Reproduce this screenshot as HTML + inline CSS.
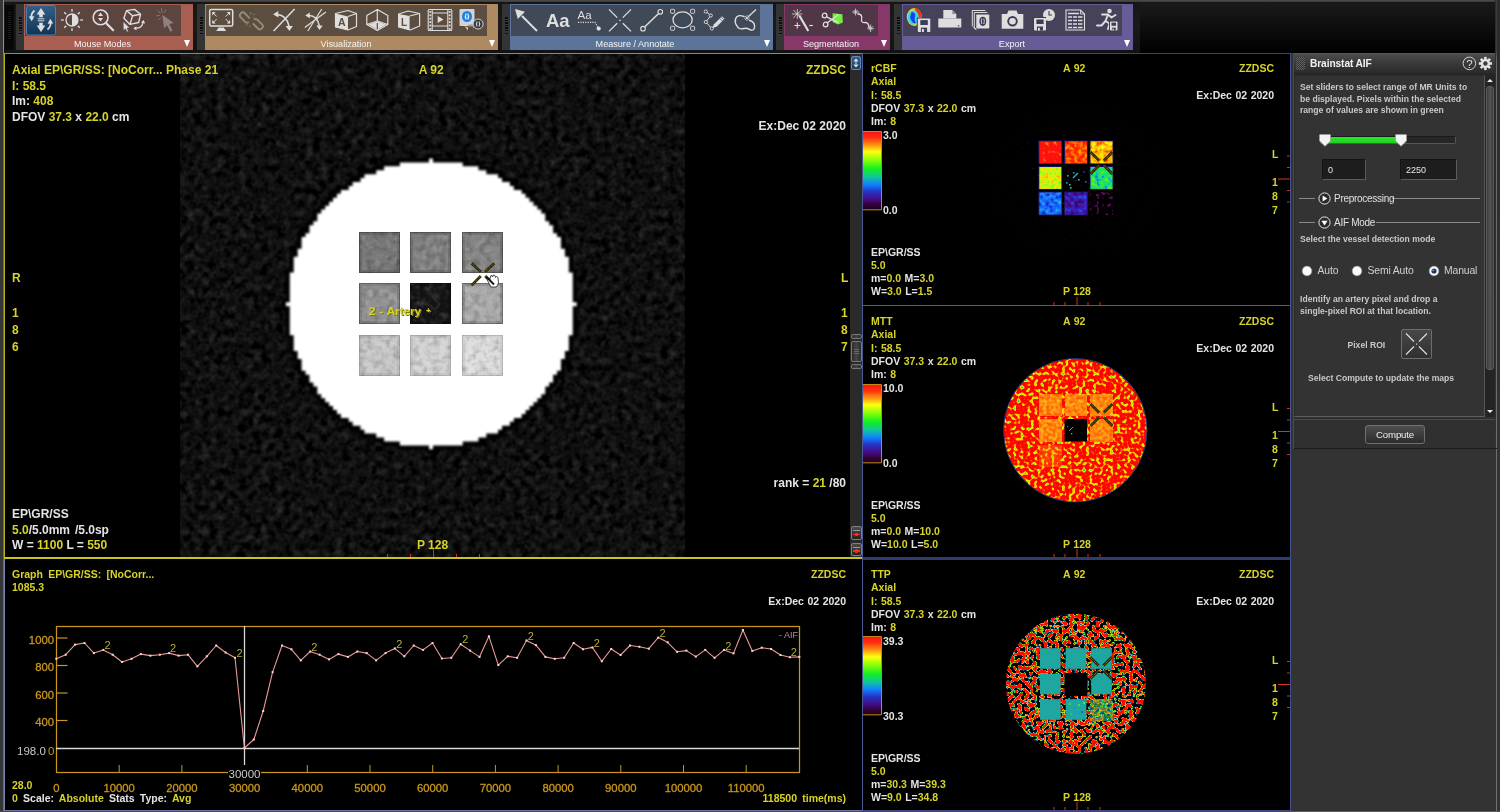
<!DOCTYPE html><html><head><meta charset="utf-8"><title>Brainstat AIF</title><style>
*{box-sizing:border-box;margin:0;padding:0}
html,body{width:1500px;height:812px;overflow:hidden;background:#000}
body{position:relative;will-change:transform;font-family:"Liberation Sans",sans-serif;color:#fff}
.a{position:absolute}
.t{position:absolute;white-space:nowrap;font-weight:bold;font-size:12px;line-height:14px;letter-spacing:0px}
.s{position:absolute;white-space:nowrap;font-weight:bold;font-size:10.5px;line-height:12px;letter-spacing:0;word-spacing:0.6px}
.y{color:#d6d329}
.w{color:#e4e4e4}
.lbl{position:absolute;color:#f4f4f4;font-size:9.1px;line-height:12px;white-space:nowrap;text-align:center}
.p{position:absolute;white-space:nowrap;font-weight:bold;font-size:8.600px;line-height:12px;color:#c8c8c8}
</style></head><body>
<svg width="0" height="0" style="position:absolute"><defs>
<filter id="nz" x="0" y="0" width="100%" height="100%" color-interpolation-filters="sRGB">
<feTurbulence type="fractalNoise" baseFrequency="0.135" numOctaves="2" seed="7"/>
<feColorMatrix type="matrix" values="0.15 0.15 0.15 0 -0.165  0.15 0.15 0.15 0 -0.165  0.15 0.15 0.15 0 -0.165  0 0 0 0 1"/>
</filter>
<linearGradient id="rb" x1="0" y1="0" x2="0" y2="1">
<stop offset="0" stop-color="#ff1414"/><stop offset="0.08" stop-color="#ff3010"/><stop offset="0.17" stop-color="#ff9010"/><stop offset="0.26" stop-color="#ffff10"/><stop offset="0.36" stop-color="#90ff08"/><stop offset="0.48" stop-color="#10f020"/><stop offset="0.58" stop-color="#10c898"/><stop offset="0.68" stop-color="#1080ff"/><stop offset="0.77" stop-color="#2434c4"/><stop offset="0.86" stop-color="#42108c"/><stop offset="0.94" stop-color="#34003a"/><stop offset="1" stop-color="#180018"/>
</linearGradient>
</defs></svg>
<div class="a" style="left:0;top:0;width:1500px;height:53px;background:linear-gradient(#484848 0,#484848 1.3px,#161616 2.3px,#1a1a1a 50%,#121212 100%)"></div>
<div class="a" style="left:1140px;top:3px;width:360px;height:50px;background:linear-gradient(#1a1a1a,#000)"></div>
<div class="a" style="left:0;top:0;width:4px;height:812px;background:#363636"></div>
<div class="a" style="left:3px;top:0;width:1px;height:812px;background:linear-gradient(#8c8c8c 0,#8c8c8c 52px,#6a6a6a 56px)"></div>
<div class="a" style="left:5px;top:5px;width:9px;height:45px;background:#080808"></div>
<div class="a" style="left:15.5px;top:4px;width:8.500px;height:46px;background:#343434"></div>
<div class="a" style="left:18.5px;top:16.5px;width:3px;height:18px;background:repeating-linear-gradient(#0a0a0a 0,#0a0a0a 1.500px,#3a3a3a 1.500px,#3a3a3a 2.600px)"></div>
<div class="a" style="left:24px;top:4px;width:169px;height:46px;background:#a85e51"></div>
<div class="a" style="left:25px;top:4.600px;width:156px;height:31px;background:#5c453f"></div>
<div class="lbl" style="left:24px;top:38px;width:157px">Mouse Modes</div>
<div class="a" style="left:183.8px;top:40.300px;width:0;height:0;border-left:3.800px solid transparent;border-right:3.800px solid transparent;border-top:7.300px solid #fff"></div>
<div class="a" style="left:196.5px;top:4px;width:8.500px;height:46px;background:#343434"></div>
<div class="a" style="left:199.5px;top:16.5px;width:3px;height:18px;background:repeating-linear-gradient(#0a0a0a 0,#0a0a0a 1.500px,#3a3a3a 1.500px,#3a3a3a 2.600px)"></div>
<div class="a" style="left:205px;top:4px;width:293px;height:46px;background:#ae8a62"></div>
<div class="a" style="left:206px;top:4.600px;width:281px;height:31px;background:#5b4d40"></div>
<div class="lbl" style="left:205px;top:38px;width:282px">Visualization</div>
<div class="a" style="left:488.8px;top:40.300px;width:0;height:0;border-left:3.800px solid transparent;border-right:3.800px solid transparent;border-top:7.300px solid #fff"></div>
<div class="a" style="left:501.5px;top:4px;width:8.500px;height:46px;background:#343434"></div>
<div class="a" style="left:504.5px;top:16.5px;width:3px;height:18px;background:repeating-linear-gradient(#0a0a0a 0,#0a0a0a 1.500px,#3a3a3a 1.500px,#3a3a3a 2.600px)"></div>
<div class="a" style="left:510px;top:4px;width:263px;height:46px;background:#5b7497"></div>
<div class="a" style="left:511px;top:4.600px;width:249px;height:31px;background:#404957"></div>
<div class="lbl" style="left:510px;top:38px;width:250px">Measure / Annotate</div>
<div class="a" style="left:763.8px;top:40.300px;width:0;height:0;border-left:3.800px solid transparent;border-right:3.800px solid transparent;border-top:7.300px solid #fff"></div>
<div class="a" style="left:775.5px;top:4px;width:8.500px;height:46px;background:#343434"></div>
<div class="a" style="left:778.5px;top:16.5px;width:3px;height:18px;background:repeating-linear-gradient(#0a0a0a 0,#0a0a0a 1.500px,#3a3a3a 1.500px,#3a3a3a 2.600px)"></div>
<div class="a" style="left:784px;top:4px;width:106px;height:46px;background:#883868"></div>
<div class="a" style="left:785px;top:4.600px;width:93px;height:31px;background:#503646"></div>
<div class="lbl" style="left:784px;top:38px;width:94px">Segmentation</div>
<div class="a" style="left:880.8px;top:40.300px;width:0;height:0;border-left:3.800px solid transparent;border-right:3.800px solid transparent;border-top:7.300px solid #fff"></div>
<div class="a" style="left:893.5px;top:4px;width:8.500px;height:46px;background:#343434"></div>
<div class="a" style="left:896.5px;top:16.5px;width:3px;height:18px;background:repeating-linear-gradient(#0a0a0a 0,#0a0a0a 1.500px,#3a3a3a 1.500px,#3a3a3a 2.600px)"></div>
<div class="a" style="left:902px;top:4px;width:231px;height:46px;background:#675c98"></div>
<div class="a" style="left:903px;top:4.600px;width:219px;height:31px;background:#45425a"></div>
<div class="lbl" style="left:902px;top:38px;width:220px">Export</div>
<div class="a" style="left:1123.8px;top:40.300px;width:0;height:0;border-left:3.800px solid transparent;border-right:3.800px solid transparent;border-top:7.300px solid #fff"></div>
<div class="a" style="left:8px;top:12px;width:3px;height:28px;background:repeating-linear-gradient(#1c1c1c 0,#1c1c1c 1px,#050505 1px,#050505 2px)"></div>
<svg class="a" style="left:0;top:0" width="1140" height="53" viewBox="0 0 1140 53" font-family="Liberation Sans, sans-serif">
<defs><linearGradient id="act" x1="0" y1="0" x2="0" y2="1"><stop offset="0" stop-color="#31608a"/><stop offset="1" stop-color="#133352"/></linearGradient></defs>
<rect x="26.5" y="5.5" width="29" height="29.5" rx="2" fill="url(#act)" stroke="#4f7fae" stroke-width="1"/>
<g transform="translate(41 20)" ><path d="M0 -12L4.3 -5.5H1.8V-2.800H-1.800V-5.500H-4.300Z M0 12L4.300 5.500H1.800V2.800H-1.800V5.500H-4.300Z" fill="#dedede"/>
<path d="M-3.3 -1.2H3.3M-3.3 0.8H3.3" stroke="#dedede" stroke-width="1"/>
<path d="M-6.500 -9.500Q-10.200 -6.500 -9.500 -2" stroke="#dedede" stroke-width="1.700" fill="none"/><path d="M-12.300 -3.500L-9.200 1.200L-6.600 -3.800Z" fill="#dedede"/>
<path d="M6.500 9.500Q10.200 6.500 9.500 2" stroke="#dedede" stroke-width="1.700" fill="none"/><path d="M12.300 3.500L9.200 -1.200L6.600 3.800Z" fill="#dedede"/></g>
<g transform="translate(72 20)" ><circle r="6" fill="none" stroke="#dedede" stroke-width="1.3"/><path d="M0 -6A6 6 0 0 1 0 6Z" fill="#dedede"/><path d="M0 -8.2V-11" transform="rotate(0)" stroke="#dedede" stroke-width="1.3"/><path d="M0 -8.2V-11" transform="rotate(45)" stroke="#dedede" stroke-width="1.3"/><path d="M0 -8.2V-11" transform="rotate(90)" stroke="#dedede" stroke-width="1.3"/><path d="M0 -8.2V-11" transform="rotate(135)" stroke="#dedede" stroke-width="1.3"/><path d="M0 -8.2V-11" transform="rotate(180)" stroke="#dedede" stroke-width="1.3"/><path d="M0 -8.2V-11" transform="rotate(225)" stroke="#dedede" stroke-width="1.3"/><path d="M0 -8.2V-11" transform="rotate(270)" stroke="#dedede" stroke-width="1.3"/><path d="M0 -8.2V-11" transform="rotate(315)" stroke="#dedede" stroke-width="1.3"/></g>
<g transform="translate(103 20)" ><circle cx="-2.4" cy="-2.6" r="7.4" fill="none" stroke="#dedede" stroke-width="1.6"/><path d="M3 3L10.2 10.200" stroke="#dedede" stroke-width="2.2" stroke-linecap="round"/><path d="M-2.5 -7.5L0 -4H-5Z M-2.5 1.5L0 -2H-5Z" fill="#dedede"/></g>
<path d="M126.5 10.6L134.5 9.4L140.6 14.200L138.6 22.500L130 24.400L123.900 18.300Z M126.500 10.600L132.600 15.800L140.600 14.200 M132.600 15.800L130 24.400" fill="none" stroke="#dedede" stroke-width="1.4" stroke-linejoin="round"/>
<path d="M123.200 21.500L123.400 30.500L125.400 28.800L126.900 32L128.500 31.300L127 28.200L129.500 27.800Z" fill="#dedede" stroke="#5b403c" stroke-width="0.5"/>
<path d="M135.500 28.200Q141.500 28.500 143 22.800" fill="none" stroke="#dedede" stroke-width="1.3"/><path d="M141 22.600L143.600 20L145.200 23.600Z M136.300 26.200L133.200 28.400L136.500 30.300Z" fill="#dedede"/>
<path d="M162.300 14.800L173.800 23.100L169.200 24L172.600 30.600L170.400 31.800L167 25.200L164.100 28.200Z" fill="#8d807d"/>
<path d="M160.800 13.500L157.500 10.500M162 12.500L161.500 8M164 13L166 9.500M160 15.500L156.500 15.800M161 17.500L158.500 20" stroke="#8d807d" stroke-width="0.8"/>
<g transform="translate(221.2 20)" ><rect x="-11.5" y="-10.5" width="23" height="16.5" rx="1.5" fill="none" stroke="#dedede" stroke-width="1.5"/><path d="M-5 11L-2.5 7.5H2.5L5 11Z" fill="#dedede"/>
<path d="M-9 -8H-5.5L-9 -4.5Z M9 -8H5.5L9 -4.5Z M-9 3.5H-5.5L-9 0Z M9 3.5H5.5L9 0Z" fill="#dedede"/>
<path d="M-8 -7L-4.5 -3.5M8 -7L4.5 -3.5M-8 2.5L-4.5 -1M8 2.5L4.5 -1" stroke="#dedede" stroke-width="1"/></g>
<path d="M249.300 17.800L244.800 13.300A2.900 2.900 0 0 0 240.700 17.400L245.200 21.900A2.900 2.900 0 0 0 247.800 22.600" fill="none" stroke="#958b7b" stroke-width="1.900" stroke-linecap="round"/>
<path d="M254 21.600L258.500 26.100A2.900 2.900 0 0 0 262.600 22L258.100 17.500A2.900 2.900 0 0 0 255.500 16.800" fill="none" stroke="#958b7b" stroke-width="1.900" stroke-linecap="round" transform="translate(-0.600 2.400)"/>
<path d="M251 14.500L250.500 12M253.200 15.300L254.800 13.500M249.500 25.200L250.200 27.500M247.500 24.200L246 26M252.800 18.200L254.300 17.600M249.300 21.800L248 22.500" stroke="#958b7b" stroke-width="0.800"/>
<g transform="translate(283.6 20)" ><path d="M-10 11L11 -11" stroke="#dedede" stroke-width="1.5"/>
<path d="M-6.5 -5.5Q3 -5 5.5 6.5" fill="none" stroke="#dedede" stroke-width="1.7"/><path d="M-10.5 -5.8L-5.3 -9V-2.5Z M5.8 11L2 6H9.3Z" fill="#dedede"/></g>
<g transform="translate(314.8 20)" ><path d="M-7 11L7 -11M-10 7.5L11 -8" stroke="#dedede" stroke-width="1.2"/>
<path d="M-6 -4.5Q2.5 -4.5 4.5 6" fill="none" stroke="#dedede" stroke-width="1.4"/><path d="M-9.5 -4.6L-5 -7.6V-1.8Z M4.8 10L1.6 5.5H7.8Z" fill="#dedede"/></g>
<g transform="translate(346 20)" ><path d="M-10.5 -6.5L2 -9.5L10.5 -6.5L10.5 6.5L2 10L-10.5 7Z" fill="none" stroke="#dedede" stroke-width="1.2" stroke-linejoin="round"/>
<path d="M-10.5 -6.5L2 -3.5V10L-10.5 7Z" fill="#dedede"/><path d="M2 -3.5L10.5 -6.5" stroke="#dedede" stroke-width="1.2"/>
<text x="-4.3" y="6" text-anchor="middle" font-size="10.5" font-weight="bold" fill="#5e4c3c">A</text></g>
<g transform="translate(377.3 20)" ><path d="M0 -10.5L10.5 -4.5V4.5L0 10.5L-10.5 4.5V-4.5Z M0 -10.5V1M-10.5 4.5L0 1L10.5 4.5" fill="none" stroke="#dedede" stroke-width="1.2" stroke-linejoin="round"/>
<path d="M-9 4.5L0 1.5L9 4.5L0 9.8Z" fill="#dedede"/><path d="M0 3V9" stroke="#5e4c3c" stroke-width="1.2"/></g>
<g transform="translate(409.1 20)" ><path d="M-10.5 -6L-1 -9L10.5 -6.5V6L1 10L-10.5 7Z" fill="none" stroke="#dedede" stroke-width="1.2" stroke-linejoin="round"/>
<path d="M-10.5 -6L0.5 -4V10L-10.5 7Z" fill="#dedede"/><path d="M0.5 -4L10.5 -6.5" stroke="#dedede" stroke-width="1.2"/>
<text x="-5" y="5.5" text-anchor="middle" font-size="10" font-weight="bold" fill="#5e4c3c">L</text></g>
<g transform="translate(440 20)" ><rect x="-11.8" y="-10.5" width="23.6" height="21" rx="1" fill="none" stroke="#dedede" stroke-width="1.1"/>
<path d="M-7.8 -10.5V10.5M7.8 -10.5V10.5M-7.8 -7H7.8M-7.8 6H7.8" stroke="#dedede" stroke-width="1.1"/><rect x="-10.6" y="-9" width="1.8" height="1.8" fill="#dedede"/><rect x="8.8" y="-9" width="1.8" height="1.8" fill="#dedede"/><rect x="-10.6" y="-5.6" width="1.8" height="1.8" fill="#dedede"/><rect x="8.8" y="-5.6" width="1.8" height="1.8" fill="#dedede"/><rect x="-10.6" y="-2.2" width="1.8" height="1.8" fill="#dedede"/><rect x="8.8" y="-2.2" width="1.8" height="1.8" fill="#dedede"/><rect x="-10.6" y="1.2" width="1.8" height="1.8" fill="#dedede"/><rect x="8.8" y="1.2" width="1.8" height="1.8" fill="#dedede"/><rect x="-10.6" y="4.6" width="1.8" height="1.8" fill="#dedede"/><rect x="8.8" y="4.6" width="1.8" height="1.8" fill="#dedede"/><rect x="-10.6" y="8" width="1.8" height="1.8" fill="#dedede"/><rect x="8.8" y="8" width="1.8" height="1.8" fill="#dedede"/><path d="M-2.3 -4L3.5 -0.5L-2.3 3Z" fill="#dedede"/></g>
<g transform="translate(470.5 20)" ><rect x="-11" y="-11" width="15" height="17" rx="1" fill="#d4d4d8"/>
<ellipse cx="-3.5" cy="-3.5" rx="5" ry="5.6" fill="#1e7fe0"/><path d="M-4.3 -6.5Q-6 -3.5 -4.3 -0.5M-2.7 -6.5Q-1 -3.5 -2.7 -0.5" stroke="#e8f0ff" stroke-width="1.2" fill="none"/>
<path d="M-6 6L-2.5 10.5V7.5Z" fill="#d4d4d8"/><path d="M-2 4.5H2.5V2.5L6 5.5L2.5 8.5V6.5H-2Z" fill="#9a9aa2"/>
<circle cx="7.6" cy="4" r="5" fill="#3a3a40" stroke="#cfcfcf" stroke-width="1"/><path d="M6.6 1.4Q5.3 4 6.6 6.6M8.6 1.4Q9.9 4 8.6 6.6" stroke="#d8d8d8" stroke-width="1.1" fill="none"/></g>
<g transform="translate(526 20)" ><path d="M11 11L-4 -4" stroke="#dedede" stroke-width="2"/><path d="M-11 -11L-1 -8.2L-8.2 -1Z" fill="#dedede"/></g>
<text x="546" y="27.3" font-size="18.5" font-weight="bold" fill="#dedede">Aa</text>
<text x="577.5" y="19.3" font-size="11.5" fill="#dedede">Aa</text><path d="M578 22.3H595L598 27.5" stroke="#dedede" stroke-width="1.2" stroke-dasharray="1.2 1.2" fill="none"/><circle cx="598.7" cy="28.6" r="2.1" fill="#dedede"/>
<g transform="translate(620 20.4)" ><path d="M-11 -11L-2.8 -2.8M11 -11L2.8 -2.8M-11 11L-2.8 2.8M11 11L2.8 2.8" stroke="#dedede" stroke-width="1.3"/><rect x="-0.7" y="-0.7" width="1.4" height="1.4" fill="#dedede"/></g>
<path d="M644.6 27L658.6 13.5" stroke="#dedede" stroke-width="1.5"/><circle cx="643" cy="28.7" r="2.3" fill="none" stroke="#dedede" stroke-width="1.1"/><circle cx="660.3" cy="11.8" r="2.3" fill="none" stroke="#dedede" stroke-width="1.1"/>
<g transform="translate(682.6 19.8)" ><ellipse rx="9.6" ry="8" fill="none" stroke="#dedede" stroke-width="1.3"/><rect x="-12" y="-10.5" width="4" height="4" rx="0.8" fill="none" stroke="#dedede" stroke-width="0.9"/><rect x="8" y="-10.5" width="4" height="4" rx="0.8" fill="none" stroke="#dedede" stroke-width="0.9"/><rect x="-12" y="6.5" width="4" height="4" rx="0.8" fill="none" stroke="#dedede" stroke-width="0.9"/><rect x="8" y="6.5" width="4" height="4" rx="0.8" fill="none" stroke="#dedede" stroke-width="0.9"/></g>
<g transform="translate(713.8 20)" ><path d="M-8 -8.5L-3 -4.5L-8 2L-2 8.5" fill="none" stroke="#dedede" stroke-width="1"/>
<circle cx="-8" cy="-8.5" r="1.6" fill="#3c4656" stroke="#dedede" stroke-width="0.9"/><circle cx="-3" cy="-4.5" r="1.6" fill="#3c4656" stroke="#dedede" stroke-width="0.9"/><circle cx="-8" cy="2" r="1.6" fill="#3c4656" stroke="#dedede" stroke-width="0.9"/><circle cx="-2" cy="8.5" r="1.6" fill="#3c4656" stroke="#dedede" stroke-width="0.9"/>
<path d="M-1.5 8L0.2 4.2L8.2 -3.8L10.8 -1.2L2.8 6.8Z" fill="#dedede"/><path d="M6 -1.5L8.5 1M7.4 -3L10 -0.4" stroke="#3c4656" stroke-width="0.7"/></g>
<g transform="translate(745 20)" ><path d="M-1 -3.5Q-8 -6 -9.5 -1Q-10.5 3 -8 6Q-6 10 -1 8.5Q2.5 7.5 5.5 10Q10 11 9.5 5.5Q9 1.5 4.5 0.5" fill="none" stroke="#dedede" stroke-width="1.4" stroke-linecap="round"/>
<path d="M3.2 -3.2L11 -10.5" stroke="#dedede" stroke-width="1.3"/><path d="M2 -5V1M-1 -2H5M0 -4L4 0M4 -4L0 0" stroke="#dedede" stroke-width="0.7"/></g>
<g transform="translate(800.8 20)" ><path d="M-1.5 -4.5L7.5 11" stroke="#dedede" stroke-width="2.2"/>
<path d="M-3.5 -11V-1M-9 -6H1.5M-7.5 -10L0.5 -2M0.5 -10L-7.5 -2" stroke="#dedede" stroke-width="0.8"/>
<path d="M-3.5 2.5V8.5M-6.5 5.5H-0.5" stroke="#dedede" stroke-width="1.1"/><path d="M8.5 5.5H12" stroke="#dedede" stroke-width="1.2"/></g>
<g transform="translate(832.6 19)" ><path d="M0 -5.8L9.8 -4.8L10.2 3.5L5.5 5.6L0 3Z" fill="#72f03e"/>
<circle cx="-8" cy="-3.5" r="2.3" fill="none" stroke="#dedede" stroke-width="1.3"/><circle cx="-7" cy="5.5" r="2.3" fill="none" stroke="#dedede" stroke-width="1.3"/>
<path d="M-6 -2.2L5.5 3.5M-5.3 3.8L6 -4.5" stroke="#dedede" stroke-width="1.4"/></g>
<g transform="translate(863.6 20)" ><path d="M-6 -6Q-1 -6 -2 -1Q-3 3 2 2.5Q5 2.5 5.5 8" fill="none" stroke="#dedede" stroke-width="1.3"/>
<path d="M-8 -11.5V-4.5M-11.5 -8H-4.5M-10 -10L-6 -6M-6 -10L-10 -6" stroke="#dedede" stroke-width="0.8"/>
<path d="M7 4.5V12M3.5 8.2H10.5M5 6.2L9 10.2M9 6.2L5 10.2" stroke="#dedede" stroke-width="0.8"/></g>
<g transform="translate(918.3 20)" ><ellipse cx="-4" cy="-3" rx="7.5" ry="9" fill="#ffd020"/><path d="M-4 -12A7.5 9 0 0 1 3.5 -3L0 -3Z" fill="#f03010"/><ellipse cx="-5" cy="-2.5" rx="5.5" ry="7.3" fill="#30d8e8"/><path d="M-6.5 -8Q-9.5 -3 -7 0.5Q-5 4 -2.5 3Q-4.5 -1 -3 -4Q-3 -8 -6.500 -8Z" fill="#1840f0"/>
<rect x="-1.5" y="-2.5" width="14" height="15" fill="#3e3a58"/><rect x="-0.5" y="-1.5" width="12.5" height="13.5" rx="0.8" fill="#dedede"/><rect x="2.0" y="0.1" width="7.5" height="4.9" fill="#3e3a58"/><rect x="2.6" y="7.7" width="6.2" height="4.3" fill="#3e3a58"/><rect x="3.6" y="9.0" width="2.0" height="3.0" fill="#dedede"/></g>
<g transform="translate(949.8 20)" ><path d="M-6.5 -1.500V-10H2.5L6.5 -6V-1.5Z" fill="#dedede"/><path d="M2.5 -10V-6H6.5" fill="#8c8a9a"/><path d="M-11.500 -1.5H11.5V7.5H-11.5Z" fill="#dedede"/><rect x="8" y="5.2" width="1.5" height="1.2" fill="#3e3a58"/></g>
<g transform="translate(980.8 20)" ><path d="M-8.500 -9.5H4.5M-8.5 -9.5V6.500" stroke="#dedede" stroke-width="1" fill="none"/><path d="M-6.5 -7.5H6.5M-6.5 -7.5V8.5" stroke="#dedede" stroke-width="1" fill="none"/>
<rect x="-4.500" y="-5.5" width="13" height="14" rx="0.8" fill="#dedede"/><ellipse cx="2" cy="1.300" rx="3.4" ry="4.600" fill="#3e3a58"/><path d="M1 -1.500Q0 1.300 1 4M3 -1.5Q4 1.300 3 4" stroke="#dedede" stroke-width="0.9" fill="none"/><path d="M-8.5 6.5L-4.5 10.5V8.5" fill="#dedede"/></g>
<g transform="translate(1012.5 20)" ><path d="M-10.800 -6H-5.500L-4 -9.600H4L5.500 -6H10.800V8.800H-10.800Z" fill="#dedede"/><circle cx="0" cy="1.200" r="5.200" fill="#3e3a58"/><circle cx="0" cy="1.200" r="3.300" fill="#dedede"/><circle cx="0" cy="1" r="2.800" fill="#3e3a58" opacity="0.0"/></g>
<g transform="translate(1043.5 20)" ><circle cx="5.500" cy="-5" r="6" fill="#dedede"/><path d="M5.500 -9V-5H8.500" stroke="#3e3a58" stroke-width="1.100" fill="none"/><rect x="-10.500" y="-3" width="13" height="14" fill="#3e3a58"/><rect x="-9.5" y="-2" width="12" height="12.5" rx="0.8" fill="#dedede"/><rect x="-7.1" y="-0.5" width="7.2" height="4.5" fill="#3e3a58"/><rect x="-6.5" y="6.5" width="6.0" height="4.0" fill="#3e3a58"/><rect x="-5.5" y="7.8" width="1.9" height="2.8" fill="#dedede"/></g>
<g transform="translate(1075 20)" ><path d="M-9 -10H5.500L9.500 -6V10H-9Z" fill="none" stroke="#dedede" stroke-width="1.100"/><path d="M5.500 -10V-6H9.500" fill="none" stroke="#dedede" stroke-width="0.9"/>
<path d="M-7 -6.500H4M-7 -3H7.500M-7 0.5H7.500M-7 4H7.500M-7 7.500H7.500" stroke="#dedede" stroke-width="1.700"/><path d="M-2.500 -5V8.500M2.500 -5V8.500" stroke="#3e3a58" stroke-width="0.9"/></g>
<g transform="translate(1106.5 20)" ><circle cx="3" cy="-9" r="2.300" fill="#dedede"/><path d="M-4.500 -5.500L1.500 -5.500L-1 1L3 3.500L1.500 9M1.500 -5.500L5 -2.500L9 -5M-1 1L-5 5.500L-9.500 5.500" fill="none" stroke="#dedede" stroke-width="1.900" stroke-linejoin="round" stroke-linecap="round"/>
<rect x="2.500" y="0.5" width="9" height="11" fill="#3e3a58"/><rect x="3.5" y="1.5" width="7.5" height="9" rx="0.8" fill="#dedede"/><rect x="5.0" y="2.6" width="4.5" height="3.2" fill="#3e3a58"/><rect x="5.4" y="7.6" width="3.8" height="2.9" fill="#3e3a58"/><rect x="6.0" y="8.5" width="1.2" height="2.0" fill="#dedede"/></g>
</svg>
<div class="a" style="left:4px;top:53px;width:859px;height:506px;background:#000;border:2px solid #c9c41f;border-left:1px solid #b4b01c;border-top:1px solid #99951a;border-right:none"></div>
<svg class="a" style="left:180px;top:54px" width="505" height="503"><rect width="505" height="503" filter="url(#nz)"/></svg>
<svg class="a" style="left:270px;top:140px" width="330" height="330" viewBox="270 140 330 330"><defs><filter id="pb" x="-2%" y="-2%" width="104%" height="104%"><feGaussianBlur stdDeviation="0.9"/></filter></defs><path d="M399.84 162.40h62.88v3.98h-62.88zM384.12 166.33h94.32v3.98h-94.32zM376.26 170.26h110.04v3.98h-110.04zM364.47 174.19h133.62v3.98h-133.62zM360.54 178.12h141.48v3.98h-141.48zM352.68 182.05h157.20v3.98h-157.20zM348.75 185.98h165.06v3.98h-165.06zM340.89 189.91h180.78v3.98h-180.78zM336.96 193.84h188.64v3.98h-188.64zM333.03 197.77h196.50v3.98h-196.50zM329.10 201.70h204.36v3.98h-204.36zM325.17 205.63h212.22v3.98h-212.22zM321.24 209.56h220.08v3.98h-220.08zM317.31 213.49h227.94v3.98h-227.94zM317.31 217.42h227.94v3.98h-227.94zM313.38 221.35h235.80v3.98h-235.80zM309.45 225.28h243.66v3.98h-243.66zM309.45 229.21h243.66v3.98h-243.66zM305.52 233.14h251.52v3.98h-251.52zM301.59 237.07h259.38v3.98h-259.38zM301.59 241.00h259.38v3.98h-259.38zM301.59 244.93h259.38v3.98h-259.38zM297.66 248.86h267.24v3.98h-267.24zM297.66 252.79h267.24v3.98h-267.24zM293.73 256.72h275.10v3.98h-275.10zM293.73 260.65h275.10v3.98h-275.10zM293.73 264.58h275.10v3.98h-275.10zM293.73 268.51h275.10v3.98h-275.10zM289.80 272.44h282.96v3.98h-282.96zM289.80 276.37h282.96v3.98h-282.96zM289.80 280.30h282.96v3.98h-282.96zM289.80 284.23h282.96v3.98h-282.96zM289.80 288.16h282.96v3.98h-282.96zM289.80 292.09h282.96v3.98h-282.96zM289.80 296.02h282.96v3.98h-282.96zM289.80 299.95h282.96v3.98h-282.96zM289.80 303.88h282.96v3.98h-282.96zM289.80 307.81h282.96v3.98h-282.96zM289.80 311.74h282.96v3.98h-282.96zM289.80 315.67h282.96v3.98h-282.96zM289.80 319.60h282.96v3.98h-282.96zM289.80 323.53h282.96v3.98h-282.96zM289.80 327.46h282.96v3.98h-282.96zM289.80 331.39h282.96v3.98h-282.96zM293.73 335.32h275.10v3.98h-275.10zM293.73 339.25h275.10v3.98h-275.10zM293.73 343.18h275.10v3.98h-275.10zM293.73 347.11h275.10v3.98h-275.10zM297.66 351.04h267.24v3.98h-267.24zM297.66 354.97h267.24v3.98h-267.24zM301.59 358.90h259.38v3.98h-259.38zM301.59 362.83h259.38v3.98h-259.38zM301.59 366.76h259.38v3.98h-259.38zM305.52 370.69h251.52v3.98h-251.52zM309.45 374.62h243.66v3.98h-243.66zM309.45 378.55h243.66v3.98h-243.66zM313.38 382.48h235.80v3.98h-235.80zM317.31 386.41h227.94v3.98h-227.94zM317.31 390.34h227.94v3.98h-227.94zM321.24 394.27h220.08v3.98h-220.08zM325.17 398.20h212.22v3.98h-212.22zM329.10 402.13h204.36v3.98h-204.36zM333.03 406.06h196.50v3.98h-196.50zM336.96 409.99h188.64v3.98h-188.64zM340.89 413.92h180.78v3.98h-180.78zM348.75 417.85h165.06v3.98h-165.06zM352.68 421.78h157.20v3.98h-157.20zM360.54 425.71h141.48v3.98h-141.48zM364.47 429.64h133.62v3.98h-133.62zM376.26 433.57h110.04v3.98h-110.04zM384.12 437.50h94.32v3.98h-94.32zM399.84 441.43h62.88v3.98h-62.88zM429.04 158.47h3.93v3.93h-3.93zM429.04 445.36h3.93v3.93h-3.93zM285.87 302.24h3.93v3.93h-3.93zM572.76 302.24h3.93v3.93h-3.93z" fill="#000" stroke="#000" stroke-width="9" stroke-opacity="0.9" stroke-linejoin="round" filter="url(#pb)"/><path d="M399.84 162.40h62.88v3.98h-62.88zM384.12 166.33h94.32v3.98h-94.32zM376.26 170.26h110.04v3.98h-110.04zM364.47 174.19h133.62v3.98h-133.62zM360.54 178.12h141.48v3.98h-141.48zM352.68 182.05h157.20v3.98h-157.20zM348.75 185.98h165.06v3.98h-165.06zM340.89 189.91h180.78v3.98h-180.78zM336.96 193.84h188.64v3.98h-188.64zM333.03 197.77h196.50v3.98h-196.50zM329.10 201.70h204.36v3.98h-204.36zM325.17 205.63h212.22v3.98h-212.22zM321.24 209.56h220.08v3.98h-220.08zM317.31 213.49h227.94v3.98h-227.94zM317.31 217.42h227.94v3.98h-227.94zM313.38 221.35h235.80v3.98h-235.80zM309.45 225.28h243.66v3.98h-243.66zM309.45 229.21h243.66v3.98h-243.66zM305.52 233.14h251.52v3.98h-251.52zM301.59 237.07h259.38v3.98h-259.38zM301.59 241.00h259.38v3.98h-259.38zM301.59 244.93h259.38v3.98h-259.38zM297.66 248.86h267.24v3.98h-267.24zM297.66 252.79h267.24v3.98h-267.24zM293.73 256.72h275.10v3.98h-275.10zM293.73 260.65h275.10v3.98h-275.10zM293.73 264.58h275.10v3.98h-275.10zM293.73 268.51h275.10v3.98h-275.10zM289.80 272.44h282.96v3.98h-282.96zM289.80 276.37h282.96v3.98h-282.96zM289.80 280.30h282.96v3.98h-282.96zM289.80 284.23h282.96v3.98h-282.96zM289.80 288.16h282.96v3.98h-282.96zM289.80 292.09h282.96v3.98h-282.96zM289.80 296.02h282.96v3.98h-282.96zM289.80 299.95h282.96v3.98h-282.96zM289.80 303.88h282.96v3.98h-282.96zM289.80 307.81h282.96v3.98h-282.96zM289.80 311.74h282.96v3.98h-282.96zM289.80 315.67h282.96v3.98h-282.96zM289.80 319.60h282.96v3.98h-282.96zM289.80 323.53h282.96v3.98h-282.96zM289.80 327.46h282.96v3.98h-282.96zM289.80 331.39h282.96v3.98h-282.96zM293.73 335.32h275.10v3.98h-275.10zM293.73 339.25h275.10v3.98h-275.10zM293.73 343.18h275.10v3.98h-275.10zM293.73 347.11h275.10v3.98h-275.10zM297.66 351.04h267.24v3.98h-267.24zM297.66 354.97h267.24v3.98h-267.24zM301.59 358.90h259.38v3.98h-259.38zM301.59 362.83h259.38v3.98h-259.38zM301.59 366.76h259.38v3.98h-259.38zM305.52 370.69h251.52v3.98h-251.52zM309.45 374.62h243.66v3.98h-243.66zM309.45 378.55h243.66v3.98h-243.66zM313.38 382.48h235.80v3.98h-235.80zM317.31 386.41h227.94v3.98h-227.94zM317.31 390.34h227.94v3.98h-227.94zM321.24 394.27h220.08v3.98h-220.08zM325.17 398.20h212.22v3.98h-212.22zM329.10 402.13h204.36v3.98h-204.36zM333.03 406.06h196.50v3.98h-196.50zM336.96 409.99h188.64v3.98h-188.64zM340.89 413.92h180.78v3.98h-180.78zM348.75 417.85h165.06v3.98h-165.06zM352.68 421.78h157.20v3.98h-157.20zM360.54 425.71h141.48v3.98h-141.48zM364.47 429.64h133.62v3.98h-133.62zM376.26 433.57h110.04v3.98h-110.04zM384.12 437.50h94.32v3.98h-94.32zM399.84 441.43h62.88v3.98h-62.88zM429.04 158.47h3.93v3.93h-3.93zM429.04 445.36h3.93v3.93h-3.93zM285.87 302.24h3.93v3.93h-3.93zM572.76 302.24h3.93v3.93h-3.93z" fill="#fff" filter="url(#pb)"/></svg>
<div class="a" style="left:359px;top:232px;width:41px;height:41px;background:#787878"></div>
<div class="a" style="left:410px;top:232px;width:41px;height:41px;background:#808080"></div>
<div class="a" style="left:462px;top:232px;width:41px;height:41px;background:#848484"></div>
<div class="a" style="left:359px;top:283px;width:41px;height:41px;background:#929292"></div>
<div class="a" style="left:410px;top:283px;width:41px;height:41px;background:#141414"></div>
<div class="a" style="left:462px;top:283px;width:41px;height:41px;background:#aaaaaa"></div>
<div class="a" style="left:359px;top:335px;width:41px;height:41px;background:#c8c8c8"></div>
<div class="a" style="left:410px;top:335px;width:41px;height:41px;background:#d3d3d3"></div>
<div class="a" style="left:462px;top:335px;width:41px;height:41px;background:#dedede"></div>
<svg class="a" style="left:355px;top:228px" width="152" height="152" viewBox="355 228 152 152"><defs><filter id="sqw" x="0" y="0" width="100%" height="100%" color-interpolation-filters="sRGB"><feTurbulence type="fractalNoise" baseFrequency="0.15" numOctaves="2" seed="3"/><feColorMatrix type="matrix" values="0 0 0 0 1  0 0 0 0 1  0 0 0 0 1  2.5 0 0 0 -1.05"/></filter><filter id="sqk" x="0" y="0" width="100%" height="100%" color-interpolation-filters="sRGB"><feTurbulence type="fractalNoise" baseFrequency="0.15" numOctaves="2" seed="9"/><feColorMatrix type="matrix" values="0 0 0 0 0  0 0 0 0 0  0 0 0 0 0  0 2.5 0 0 -1.05"/></filter></defs><rect x="359" y="232" width="41" height="41" filter="url(#sqw)" opacity="0.15"/><rect x="359" y="232" width="41" height="41" filter="url(#sqk)" opacity="0.17"/><rect x="360.5" y="233.5" width="38" height="38" fill="none" stroke="#000" stroke-width="3" stroke-opacity="0.13"/><rect x="359.5" y="232.5" width="40" height="40" fill="none" stroke="#000" stroke-opacity="0.26"/><rect x="410" y="232" width="41" height="41" filter="url(#sqw)" opacity="0.15"/><rect x="410" y="232" width="41" height="41" filter="url(#sqk)" opacity="0.17"/><rect x="411.5" y="233.5" width="38" height="38" fill="none" stroke="#000" stroke-width="3" stroke-opacity="0.13"/><rect x="410.5" y="232.5" width="40" height="40" fill="none" stroke="#000" stroke-opacity="0.26"/><rect x="462" y="232" width="41" height="41" filter="url(#sqw)" opacity="0.15"/><rect x="462" y="232" width="41" height="41" filter="url(#sqk)" opacity="0.17"/><rect x="463.5" y="233.5" width="38" height="38" fill="none" stroke="#000" stroke-width="3" stroke-opacity="0.13"/><rect x="462.5" y="232.5" width="40" height="40" fill="none" stroke="#000" stroke-opacity="0.26"/><rect x="359" y="283" width="41" height="41" filter="url(#sqw)" opacity="0.15"/><rect x="359" y="283" width="41" height="41" filter="url(#sqk)" opacity="0.17"/><rect x="360.5" y="284.5" width="38" height="38" fill="none" stroke="#000" stroke-width="3" stroke-opacity="0.13"/><rect x="359.5" y="283.5" width="40" height="40" fill="none" stroke="#000" stroke-opacity="0.26"/><rect x="410" y="283" width="41" height="41" filter="url(#sqw)" opacity="0.15"/><rect x="410" y="283" width="41" height="41" filter="url(#sqk)" opacity="0.17"/><rect x="411.5" y="284.5" width="38" height="38" fill="none" stroke="#000" stroke-width="3" stroke-opacity="0.13"/><rect x="410.5" y="283.5" width="40" height="40" fill="none" stroke="#000" stroke-opacity="0.26"/><rect x="462" y="283" width="41" height="41" filter="url(#sqw)" opacity="0.15"/><rect x="462" y="283" width="41" height="41" filter="url(#sqk)" opacity="0.17"/><rect x="463.5" y="284.5" width="38" height="38" fill="none" stroke="#000" stroke-width="3" stroke-opacity="0.13"/><rect x="462.5" y="283.5" width="40" height="40" fill="none" stroke="#000" stroke-opacity="0.26"/><rect x="359" y="335" width="41" height="41" filter="url(#sqw)" opacity="0.15"/><rect x="359" y="335" width="41" height="41" filter="url(#sqk)" opacity="0.17"/><rect x="360.5" y="336.5" width="38" height="38" fill="none" stroke="#000" stroke-width="3" stroke-opacity="0.06"/><rect x="359.5" y="335.5" width="40" height="40" fill="none" stroke="#000" stroke-opacity="0.13"/><rect x="410" y="335" width="41" height="41" filter="url(#sqw)" opacity="0.15"/><rect x="410" y="335" width="41" height="41" filter="url(#sqk)" opacity="0.17"/><rect x="411.5" y="336.5" width="38" height="38" fill="none" stroke="#000" stroke-width="3" stroke-opacity="0.06"/><rect x="410.5" y="335.5" width="40" height="40" fill="none" stroke="#000" stroke-opacity="0.13"/><rect x="462" y="335" width="41" height="41" filter="url(#sqw)" opacity="0.15"/><rect x="462" y="335" width="41" height="41" filter="url(#sqk)" opacity="0.17"/><rect x="463.5" y="336.5" width="38" height="38" fill="none" stroke="#000" stroke-width="3" stroke-opacity="0.06"/><rect x="462.5" y="335.5" width="40" height="40" fill="none" stroke="#000" stroke-opacity="0.13"/></svg>
<div class="t" style="left:12px;top:63px;"><span class="y">Axial EP\GR/SS: [NoCorr... Phase 21</span></div>
<div class="t" style="left:12px;top:79px;"><span class="y">I: 58.5</span></div>
<div class="t" style="left:12px;top:94px;"><span class="w">Im: </span><span class="y">408</span></div>
<div class="t" style="left:12px;top:110px;"><span class="w">DFOV </span><span class="y">37.3</span><span class="w"> x </span><span class="y">22.0</span><span class="w"> cm</span></div>
<div class="t" style="left:418.7px;top:63px;"><span class="y">A 92</span></div>
<div class="t" style="right:654px;top:63.2px;"><span class="y">ZZDSC</span></div>
<div class="t" style="right:654px;top:118.8px;"><span class="w">Ex:Dec 02 2020</span></div>
<div class="t" style="left:12px;top:271px;"><span class="y">R</span></div>
<div class="t" style="left:12px;top:305.7px;"><span class="y">1</span></div>
<div class="t" style="left:12px;top:322.7px;"><span class="y">8</span></div>
<div class="t" style="left:12px;top:339.7px;"><span class="y">6</span></div>
<div class="t" style="left:841px;top:271.2px;"><span class="y">L</span></div>
<div class="t" style="left:841px;top:305.7px;"><span class="y">1</span></div>
<div class="t" style="left:841px;top:322.7px;"><span class="y">8</span></div>
<div class="t" style="left:841px;top:339.7px;"><span class="y">7</span></div>
<div class="t" style="right:654px;top:475.7px;"><span class="w">rank = </span><span class="y">21</span><span class="w"> /80</span></div>
<div class="t" style="left:12px;top:507px;"><span class="w">EP\GR/SS</span></div>
<div class="t" style="left:12px;top:522.6px;word-spacing:1.5px"><span class="y">5.0</span><span class="w">/5.0mm /5.0sp</span></div>
<div class="t" style="left:12px;top:538px;"><span class="w">W = </span><span class="y">1100</span><span class="w"> L = </span><span class="y">550</span></div>
<div class="t" style="left:417px;top:538.3px;"><span class="y">P 128</span></div>
<div class="s" style="left:369px;top:304.5px;font-size:11.7px;text-shadow:1px 1px 0 #77770e"><span class="y">2 - Artery</span><span class="y" style="font-size:8px;position:relative;left:5px;top:-1.5px">+</span></div>
<svg class="a" style="left:465px;top:255px" width="40" height="40" viewBox="465 255 40 40"><path d="M471.600 263.200L480.800 271.800M494.400 263.200L485.200 271.800M471.600 285.400L480.800 276M485.200 276L494.400 285.400" stroke="#2a2608" stroke-width="2.7"/><path d="M471.600 263.200L480.800 271.800M494.400 263.200L485.200 271.800M471.600 285.400L480.800 276M485.200 276L494.400 285.400" stroke="#c8b81e" stroke-width="0.700" stroke-dasharray="0.9 1.2"/><path d="M487 279.500L489 278L490 279.500L490.500 276L492 275.500L492.500 277L493.500 275L495 275.500L495.500 277.500L496.500 276.500L498 277.500L498.500 283L496.500 287H491Z" fill="#fff" stroke="#222" stroke-width="0.8" stroke-linejoin="round"/><path d="M486.500 277L494 284.500" stroke="#16140a" stroke-width="1.800"/></svg>
<div class="a" style="left:387px;top:554px;width:1px;height:3px;background:#d8301a"></div>
<div class="a" style="left:410px;top:554px;width:1px;height:3px;background:#d8301a"></div>
<div class="a" style="left:433px;top:549px;width:1px;height:8px;background:#d8301a"></div>
<div class="a" style="left:456px;top:554px;width:1px;height:3px;background:#d8301a"></div>
<div class="a" style="left:479px;top:554px;width:1px;height:3px;background:#d8301a"></div>
<div class="a" style="left:850px;top:54px;width:12px;height:503px;background:#2a2a2a"></div>
<div class="a" style="left:851px;top:56px;width:10px;height:14px;background:linear-gradient(#35608a,#1c3f60);border:1px solid #5f8dba;border-radius:2px"></div>
<div class="a" style="left:851px;top:333.5px;width:10.5px;height:5.5px;background:linear-gradient(90deg,#2c2c2c,#444 50%,#2c2c2c);border:1px solid #787878;border-radius:2px"></div>
<div class="a" style="left:851px;top:341px;width:10.5px;height:20.5px;background:linear-gradient(90deg,#2c2c2c,#444 50%,#2c2c2c);border:1px solid #787878;border-radius:2px"></div>
<div class="a" style="left:851px;top:363.5px;width:10.5px;height:5.5px;background:linear-gradient(90deg,#2c2c2c,#444 50%,#2c2c2c);border:1px solid #787878;border-radius:2px"></div>
<div class="a" style="left:854px;top:349px;width:5px;height:5px;background:repeating-linear-gradient(#6a6a6a 0,#6a6a6a 1px,#3a3a3a 1px,#3a3a3a 2px)"></div>
<div class="a" style="left:851px;top:526px;width:10.5px;height:13.5px;background:linear-gradient(#4a4a4a,#222);border:1px solid #808080;border-radius:2px"></div>
<div class="a" style="left:853px;top:533.5px;width:7px;height:1.6px;background:#ff2a1a"></div><div class="a" style="left:855px;top:532.5px;width:3px;height:3.6px;background:#ff2a1a;border-radius:1px"></div><div class="a" style="left:853px;top:530px;width:7px;height:1px;background:#9a9a9a"></div>
<div class="a" style="left:851px;top:542.5px;width:10.5px;height:13.5px;background:linear-gradient(#4a4a4a,#222);border:1px solid #808080;border-radius:2px"></div>
<div class="a" style="left:853px;top:550.0px;width:7px;height:1.6px;background:#ff2a1a"></div><div class="a" style="left:855px;top:549.0px;width:3px;height:3.6px;background:#ff2a1a;border-radius:1px"></div><div class="a" style="left:853px;top:546.5px;width:7px;height:1px;background:#9a9a9a"></div>
<svg class="a" style="left:851px;top:56px" width="10" height="14" viewBox="0 0 10 14"><path d="M5 2.500L7.500 5.500H2.500Z M5 11.500L7.500 8.500H2.500Z" fill="#e8eef6"/><rect x="4.300" y="6.300" width="1.400" height="1.400" fill="#e8eef6"/></svg>
<div class="a" style="left:3.5px;top:559px;width:859px;height:252px;background:#000;border-left:1.5px solid #7680a8;border-bottom:1px solid #6a76a4"></div>
<div class="s" style="left:12px;top:568px;word-spacing:2.3px"><span class="y">Graph EP\GR/SS: [NoCorr...</span></div>
<div class="s" style="left:12px;top:581px;"><span class="y">1085.3</span></div>
<div class="s" style="right:654px;top:568px;"><span class="y">ZZDSC</span></div>
<div class="s" style="right:654px;top:595px;"><span class="w">Ex:Dec 02 2020</span></div>
<div class="s" style="left:12px;top:778.6px;"><span class="y">28.0</span></div>
<div class="s" style="left:12px;top:792px;word-spacing:2.3px"><span class="y">0</span><span class="w"> Scale: </span><span class="y">Absolute</span><span class="w"> Stats Type: </span><span class="y">Avg</span></div>
<div class="s" style="right:654px;top:792px;word-spacing:2.3px"><span class="y">118500 time(ms)</span></div>
<svg class="a" style="left:0;top:559px" width="862" height="250" viewBox="0 559 862 250" font-family="Liberation Sans, sans-serif">
<rect x="56.5" y="626.5" width="743" height="146" fill="none" stroke="#c8961e" stroke-width="1.25"/>
<path d="M56 638H67.5" stroke="#c8961e" stroke-width="1.2"/>
<text x="54" y="643.8" text-anchor="end" font-size="11.3" fill="#c8961e" stroke="#c8961e" stroke-width="0.3">1000</text>
<path d="M56 665.5H67.5" stroke="#c8961e" stroke-width="1.2"/>
<text x="54" y="671.3" text-anchor="end" font-size="11.3" fill="#c8961e" stroke="#c8961e" stroke-width="0.3">800</text>
<path d="M56 693H67.5" stroke="#c8961e" stroke-width="1.2"/>
<text x="54" y="698.8" text-anchor="end" font-size="11.3" fill="#c8961e" stroke="#c8961e" stroke-width="0.3">600</text>
<path d="M56 720.5H67.5" stroke="#c8961e" stroke-width="1.2"/>
<text x="54" y="726.3" text-anchor="end" font-size="11.3" fill="#c8961e" stroke="#c8961e" stroke-width="0.3">400</text>
<path d="M119.2 765V773" stroke="#c8961e" stroke-width="1"/>
<path d="M181.9 765V773" stroke="#c8961e" stroke-width="1"/>
<path d="M307.3 765V773" stroke="#c8961e" stroke-width="1"/>
<path d="M370.0 765V773" stroke="#c8961e" stroke-width="1"/>
<path d="M432.7 765V773" stroke="#c8961e" stroke-width="1"/>
<path d="M495.4 765V773" stroke="#c8961e" stroke-width="1"/>
<path d="M558.1 765V773" stroke="#c8961e" stroke-width="1"/>
<path d="M620.8 765V773" stroke="#c8961e" stroke-width="1"/>
<path d="M683.5 765V773" stroke="#c8961e" stroke-width="1"/>
<path d="M746.2 765V773" stroke="#c8961e" stroke-width="1"/>
<text x="56.5" y="791.5" text-anchor="middle" font-size="11.3" fill="#c8961e" stroke="#c8961e" stroke-width="0.3">0</text>
<text x="119.2" y="791.5" text-anchor="middle" font-size="11.3" fill="#c8961e" stroke="#c8961e" stroke-width="0.3">10000</text>
<text x="181.9" y="791.5" text-anchor="middle" font-size="11.3" fill="#c8961e" stroke="#c8961e" stroke-width="0.3">20000</text>
<text x="244.6" y="791.5" text-anchor="middle" font-size="11.3" fill="#c8961e" stroke="#c8961e" stroke-width="0.3">30000</text>
<text x="307.3" y="791.5" text-anchor="middle" font-size="11.3" fill="#c8961e" stroke="#c8961e" stroke-width="0.3">40000</text>
<text x="370.0" y="791.5" text-anchor="middle" font-size="11.3" fill="#c8961e" stroke="#c8961e" stroke-width="0.3">50000</text>
<text x="432.7" y="791.5" text-anchor="middle" font-size="11.3" fill="#c8961e" stroke="#c8961e" stroke-width="0.3">60000</text>
<text x="495.4" y="791.5" text-anchor="middle" font-size="11.3" fill="#c8961e" stroke="#c8961e" stroke-width="0.3">70000</text>
<text x="558.1" y="791.5" text-anchor="middle" font-size="11.3" fill="#c8961e" stroke="#c8961e" stroke-width="0.3">80000</text>
<text x="620.8" y="791.5" text-anchor="middle" font-size="11.3" fill="#c8961e" stroke="#c8961e" stroke-width="0.3">90000</text>
<text x="683.5" y="791.5" text-anchor="middle" font-size="11.3" fill="#c8961e" stroke="#c8961e" stroke-width="0.3">100000</text>
<text x="746.2" y="791.5" text-anchor="middle" font-size="11.3" fill="#c8961e" stroke="#c8961e" stroke-width="0.3">110000</text>
<path d="M244.5 626V765" stroke="#d8d8d8" stroke-width="1.3"/>
<path d="M56 748.5H799" stroke="#d8d8d8" stroke-width="1.3"/>
<rect x="16" y="743" width="31" height="13" fill="#000"/>
<text x="17" y="755" font-size="11.5" fill="#c8c8c8">198.0</text>
<text x="48" y="755" font-size="11.5" fill="#c8961e">0</text>
<rect x="228" y="767" width="33" height="12" fill="#000"/>
<text x="244.5" y="778" text-anchor="middle" font-size="11.5" fill="#c8c8c8">30000</text>
<path d="M56.3 658.8 L65.7 654.7 L75.1 644.6 L84.5 643.0 L93.9 653.1 L103.3 649.9 L112.7 654.7 L122.1 662.0 L131.5 658.8 L140.9 654.1 L150.3 655.6 L159.8 654.7 L169.2 653.1 L178.6 655.6 L188.0 654.7 L197.4 666.4 L206.8 656.3 L216.2 645.5 L225.6 652.5 L235.0 657.8 L244.4 748.0 L253.8 739.5 L263.2 711.0 L272.6 672.1 L282.0 645.5 L291.4 649.3 L300.8 660.4 L310.2 651.5 L319.6 654.7 L329.0 659.4 L338.4 654.1 L347.9 656.9 L357.3 651.5 L366.7 653.1 L376.1 660.4 L385.5 653.1 L394.9 648.4 L404.3 656.3 L413.7 645.5 L423.1 649.9 L432.5 643.0 L441.9 658.5 L451.3 657.8 L460.7 644.2 L470.1 650.6 L479.5 656.9 L488.9 636.3 L498.3 665.1 L507.7 656.3 L517.1 657.8 L526.5 640.4 L536.0 645.2 L545.4 656.9 L554.8 658.8 L564.2 657.8 L573.6 643.0 L583.0 649.3 L592.4 647.4 L601.8 661.3 L611.2 649.0 L620.6 655.0 L630.0 645.5 L639.4 646.8 L648.8 648.7 L658.2 637.6 L667.6 642.3 L677.0 651.8 L686.4 650.6 L695.8 656.6 L705.2 649.9 L714.6 657.8 L724.1 649.9 L733.5 653.4 L742.9 630.0 L752.3 650.9 L761.7 647.7 L771.1 649.0 L780.5 655.0 L789.9 657.2 L799.3 656.9" fill="none" stroke="#e89a96" stroke-width="1.1" stroke-linejoin="round"/>
<rect x="55.3" y="657.8" width="2" height="2" fill="#ffd0cc"/>
<rect x="64.7" y="653.7" width="2" height="2" fill="#ffd0cc"/>
<rect x="74.1" y="643.6" width="2" height="2" fill="#ffd0cc"/>
<rect x="83.5" y="642.0" width="2" height="2" fill="#ffd0cc"/>
<rect x="92.9" y="652.1" width="2" height="2" fill="#ffd0cc"/>
<rect x="102.3" y="648.9" width="2" height="2" fill="#ffd0cc"/>
<rect x="111.7" y="653.7" width="2" height="2" fill="#ffd0cc"/>
<rect x="121.1" y="661.0" width="2" height="2" fill="#ffd0cc"/>
<rect x="130.5" y="657.8" width="2" height="2" fill="#ffd0cc"/>
<rect x="139.9" y="653.1" width="2" height="2" fill="#ffd0cc"/>
<rect x="149.3" y="654.6" width="2" height="2" fill="#ffd0cc"/>
<rect x="158.8" y="653.7" width="2" height="2" fill="#ffd0cc"/>
<rect x="168.2" y="652.1" width="2" height="2" fill="#ffd0cc"/>
<rect x="177.6" y="654.6" width="2" height="2" fill="#ffd0cc"/>
<rect x="187.0" y="653.7" width="2" height="2" fill="#ffd0cc"/>
<rect x="196.4" y="665.4" width="2" height="2" fill="#ffd0cc"/>
<rect x="205.8" y="655.3" width="2" height="2" fill="#ffd0cc"/>
<rect x="215.2" y="644.5" width="2" height="2" fill="#ffd0cc"/>
<rect x="224.6" y="651.5" width="2" height="2" fill="#ffd0cc"/>
<rect x="234.0" y="656.8" width="2" height="2" fill="#ffd0cc"/>
<rect x="243.4" y="747.0" width="2" height="2" fill="#ffd0cc"/>
<rect x="252.8" y="738.5" width="2" height="2" fill="#ffd0cc"/>
<rect x="262.2" y="710.0" width="2" height="2" fill="#ffd0cc"/>
<rect x="271.6" y="671.1" width="2" height="2" fill="#ffd0cc"/>
<rect x="281.0" y="644.5" width="2" height="2" fill="#ffd0cc"/>
<rect x="290.4" y="648.3" width="2" height="2" fill="#ffd0cc"/>
<rect x="299.8" y="659.4" width="2" height="2" fill="#ffd0cc"/>
<rect x="309.2" y="650.5" width="2" height="2" fill="#ffd0cc"/>
<rect x="318.6" y="653.7" width="2" height="2" fill="#ffd0cc"/>
<rect x="328.0" y="658.4" width="2" height="2" fill="#ffd0cc"/>
<rect x="337.4" y="653.1" width="2" height="2" fill="#ffd0cc"/>
<rect x="346.9" y="655.9" width="2" height="2" fill="#ffd0cc"/>
<rect x="356.3" y="650.5" width="2" height="2" fill="#ffd0cc"/>
<rect x="365.7" y="652.1" width="2" height="2" fill="#ffd0cc"/>
<rect x="375.1" y="659.4" width="2" height="2" fill="#ffd0cc"/>
<rect x="384.5" y="652.1" width="2" height="2" fill="#ffd0cc"/>
<rect x="393.9" y="647.4" width="2" height="2" fill="#ffd0cc"/>
<rect x="403.3" y="655.3" width="2" height="2" fill="#ffd0cc"/>
<rect x="412.7" y="644.5" width="2" height="2" fill="#ffd0cc"/>
<rect x="422.1" y="648.9" width="2" height="2" fill="#ffd0cc"/>
<rect x="431.5" y="642.0" width="2" height="2" fill="#ffd0cc"/>
<rect x="440.9" y="657.5" width="2" height="2" fill="#ffd0cc"/>
<rect x="450.3" y="656.8" width="2" height="2" fill="#ffd0cc"/>
<rect x="459.7" y="643.2" width="2" height="2" fill="#ffd0cc"/>
<rect x="469.1" y="649.6" width="2" height="2" fill="#ffd0cc"/>
<rect x="478.5" y="655.9" width="2" height="2" fill="#ffd0cc"/>
<rect x="487.9" y="635.3" width="2" height="2" fill="#ffd0cc"/>
<rect x="497.3" y="664.1" width="2" height="2" fill="#ffd0cc"/>
<rect x="506.7" y="655.3" width="2" height="2" fill="#ffd0cc"/>
<rect x="516.1" y="656.8" width="2" height="2" fill="#ffd0cc"/>
<rect x="525.5" y="639.4" width="2" height="2" fill="#ffd0cc"/>
<rect x="535.0" y="644.2" width="2" height="2" fill="#ffd0cc"/>
<rect x="544.4" y="655.9" width="2" height="2" fill="#ffd0cc"/>
<rect x="553.8" y="657.8" width="2" height="2" fill="#ffd0cc"/>
<rect x="563.2" y="656.8" width="2" height="2" fill="#ffd0cc"/>
<rect x="572.6" y="642.0" width="2" height="2" fill="#ffd0cc"/>
<rect x="582.0" y="648.3" width="2" height="2" fill="#ffd0cc"/>
<rect x="591.4" y="646.4" width="2" height="2" fill="#ffd0cc"/>
<rect x="600.8" y="660.3" width="2" height="2" fill="#ffd0cc"/>
<rect x="610.2" y="648.0" width="2" height="2" fill="#ffd0cc"/>
<rect x="619.6" y="654.0" width="2" height="2" fill="#ffd0cc"/>
<rect x="629.0" y="644.5" width="2" height="2" fill="#ffd0cc"/>
<rect x="638.4" y="645.8" width="2" height="2" fill="#ffd0cc"/>
<rect x="647.8" y="647.7" width="2" height="2" fill="#ffd0cc"/>
<rect x="657.2" y="636.6" width="2" height="2" fill="#ffd0cc"/>
<rect x="666.6" y="641.3" width="2" height="2" fill="#ffd0cc"/>
<rect x="676.0" y="650.8" width="2" height="2" fill="#ffd0cc"/>
<rect x="685.4" y="649.6" width="2" height="2" fill="#ffd0cc"/>
<rect x="694.8" y="655.6" width="2" height="2" fill="#ffd0cc"/>
<rect x="704.2" y="648.9" width="2" height="2" fill="#ffd0cc"/>
<rect x="713.6" y="656.8" width="2" height="2" fill="#ffd0cc"/>
<rect x="723.1" y="648.9" width="2" height="2" fill="#ffd0cc"/>
<rect x="732.5" y="652.4" width="2" height="2" fill="#ffd0cc"/>
<rect x="741.9" y="629.0" width="2" height="2" fill="#ffd0cc"/>
<rect x="751.3" y="649.9" width="2" height="2" fill="#ffd0cc"/>
<rect x="760.7" y="646.7" width="2" height="2" fill="#ffd0cc"/>
<rect x="770.1" y="648.0" width="2" height="2" fill="#ffd0cc"/>
<rect x="779.5" y="654.0" width="2" height="2" fill="#ffd0cc"/>
<rect x="788.9" y="656.2" width="2" height="2" fill="#ffd0cc"/>
<rect x="798.3" y="655.9" width="2" height="2" fill="#ffd0cc"/>
<text x="107.6" y="649.2" text-anchor="middle" font-size="11" fill="#b8ae30">2</text>
<text x="173.1" y="651.7" text-anchor="middle" font-size="11" fill="#b8ae30">2</text>
<text x="239.6" y="657.1" text-anchor="middle" font-size="11" fill="#b8ae30">2</text>
<text x="314.2" y="650.8" text-anchor="middle" font-size="11" fill="#b8ae30">2</text>
<text x="399.4" y="647.6" text-anchor="middle" font-size="11" fill="#b8ae30">2</text>
<text x="465.4" y="642.9" text-anchor="middle" font-size="11" fill="#b8ae30">2</text>
<text x="530.9" y="639.7" text-anchor="middle" font-size="11" fill="#b8ae30">2</text>
<text x="596.8" y="647.0" text-anchor="middle" font-size="11" fill="#b8ae30">2</text>
<text x="662.6" y="636.5" text-anchor="middle" font-size="11" fill="#b8ae30">2</text>
<text x="728.4" y="649.5" text-anchor="middle" font-size="11" fill="#b8ae30">2</text>
<text x="793.9" y="655.8" text-anchor="middle" font-size="11" fill="#b8ae30">2</text>
<text x="798" y="637.5" text-anchor="end" font-size="9" fill="#c88a86">- AIF</text>
</svg>
<div class="a" style="left:862px;top:53px;width:429px;height:758px;background:#000"></div>
<div class="a" style="left:862px;top:53px;width:429px;height:1px;background:#38457a"></div>
<div class="a" style="left:863px;top:304.5px;width:428px;height:1.7px;background:#4a5a9c"></div>
<div class="a" style="left:863px;top:557px;width:428px;height:2.5px;background:#303c70"></div>
<div class="a" style="left:862px;top:809.5px;width:429px;height:1.5px;background:#3e4a84"></div>
<div class="a" style="left:1290px;top:53px;width:1px;height:758px;background:#44508c"></div>
<div class="a" style="left:861.7px;top:53px;width:1.6px;height:758px;background:#4a5898"></div>
<div class="s" style="left:871px;top:62.1px;"><span class="y">rCBF</span></div>
<div class="s" style="left:871px;top:75.1px;"><span class="y">Axial</span></div>
<div class="s" style="left:871px;top:89.1px;"><span class="y">I: 58.5</span></div>
<div class="s" style="left:871px;top:102.1px;"><span class="w">DFOV </span><span class="y">37.3</span><span class="w"> x </span><span class="y">22.0</span><span class="w"> cm</span></div>
<div class="s" style="left:871px;top:115.1px;"><span class="w">Im: </span><span class="y">8</span></div>
<div class="s" style="left:1063px;top:62.1px;"><span class="y">A 92</span></div>
<div class="s" style="right:226px;top:62.1px;"><span class="y">ZZDSC</span></div>
<div class="s" style="right:226px;top:89.1px;"><span class="w">Ex:Dec 02 2020</span></div>
<div class="s" style="left:1272px;top:148.1px;"><span class="y">L</span></div>
<div class="s" style="left:1272px;top:176.1px;"><span class="y">1</span></div>
<div class="s" style="left:1272px;top:190.1px;"><span class="y">8</span></div>
<div class="s" style="left:1272px;top:204.1px;"><span class="y">7</span></div>
<div class="s" style="left:871px;top:246.1px;"><span class="w">EP\GR/SS</span></div>
<div class="s" style="left:871px;top:259.1px;"><span class="y">5.0</span></div>
<div class="s" style="left:871px;top:272.1px;"><span class="w">m=</span><span class="y">0.0</span><span class="w"> M=</span><span class="y">3.0</span></div>
<div class="s" style="left:871px;top:285.1px;"><span class="w">W=</span><span class="y">3.0</span><span class="w"> L=</span><span class="y">1.5</span></div>
<div class="s" style="left:1063px;top:285.1px;"><span class="y">P 128</span></div>
<svg class="a" style="left:863px;top:130.6px" width="20" height="80"><rect x="0" y="0.5" width="18" height="78" fill="url(#rb)"/><path d="M0 0.500H18.500V78.800H0" stroke="#c78a10" fill="none"/></svg>
<div class="s" style="left:883px;top:129.1px;"><span class="w">3.0</span></div>
<div class="s" style="left:883px;top:204.1px;"><span class="w">0.0</span></div>
<div class="s" style="left:871px;top:315.1px;"><span class="y">MTT</span></div>
<div class="s" style="left:871px;top:328.1px;"><span class="y">Axial</span></div>
<div class="s" style="left:871px;top:342.1px;"><span class="y">I: 58.5</span></div>
<div class="s" style="left:871px;top:355.1px;"><span class="w">DFOV </span><span class="y">37.3</span><span class="w"> x </span><span class="y">22.0</span><span class="w"> cm</span></div>
<div class="s" style="left:871px;top:368.1px;"><span class="w">Im: </span><span class="y">8</span></div>
<div class="s" style="left:1063px;top:315.1px;"><span class="y">A 92</span></div>
<div class="s" style="right:226px;top:315.1px;"><span class="y">ZZDSC</span></div>
<div class="s" style="right:226px;top:342.1px;"><span class="w">Ex:Dec 02 2020</span></div>
<div class="s" style="left:1272px;top:401.1px;"><span class="y">L</span></div>
<div class="s" style="left:1272px;top:429.1px;"><span class="y">1</span></div>
<div class="s" style="left:1272px;top:443.1px;"><span class="y">8</span></div>
<div class="s" style="left:1272px;top:457.1px;"><span class="y">7</span></div>
<div class="s" style="left:871px;top:499.1px;"><span class="w">EP\GR/SS</span></div>
<div class="s" style="left:871px;top:512.1px;"><span class="y">5.0</span></div>
<div class="s" style="left:871px;top:525.1px;"><span class="w">m=</span><span class="y">0.0</span><span class="w"> M=</span><span class="y">10.0</span></div>
<div class="s" style="left:871px;top:538.1px;"><span class="w">W=</span><span class="y">10.0</span><span class="w"> L=</span><span class="y">5.0</span></div>
<div class="s" style="left:1063px;top:538.1px;"><span class="y">P 128</span></div>
<svg class="a" style="left:863px;top:383.6px" width="20" height="80"><rect x="0" y="0.5" width="18" height="78" fill="url(#rb)"/><path d="M0 0.500H18.500V78.800H0" stroke="#c78a10" fill="none"/></svg>
<div class="s" style="left:883px;top:382.1px;"><span class="w">10.0</span></div>
<div class="s" style="left:883px;top:457.1px;"><span class="w">0.0</span></div>
<div class="s" style="left:871px;top:567.6px;"><span class="y">TTP</span></div>
<div class="s" style="left:871px;top:580.6px;"><span class="y">Axial</span></div>
<div class="s" style="left:871px;top:594.6px;"><span class="y">I: 58.5</span></div>
<div class="s" style="left:871px;top:607.6px;"><span class="w">DFOV </span><span class="y">37.3</span><span class="w"> x </span><span class="y">22.0</span><span class="w"> cm</span></div>
<div class="s" style="left:871px;top:620.6px;"><span class="w">Im: </span><span class="y">8</span></div>
<div class="s" style="left:1063px;top:567.6px;"><span class="y">A 92</span></div>
<div class="s" style="right:226px;top:567.6px;"><span class="y">ZZDSC</span></div>
<div class="s" style="right:226px;top:594.6px;"><span class="w">Ex:Dec 02 2020</span></div>
<div class="s" style="left:1272px;top:653.6px;"><span class="y">L</span></div>
<div class="s" style="left:1272px;top:681.6px;"><span class="y">1</span></div>
<div class="s" style="left:1272px;top:695.6px;"><span class="y">8</span></div>
<div class="s" style="left:1272px;top:709.6px;"><span class="y">7</span></div>
<div class="s" style="left:871px;top:751.6px;"><span class="w">EP\GR/SS</span></div>
<div class="s" style="left:871px;top:764.6px;"><span class="y">5.0</span></div>
<div class="s" style="left:871px;top:777.6px;"><span class="w">m=</span><span class="y">30.3</span><span class="w"> M=</span><span class="y">39.3</span></div>
<div class="s" style="left:871px;top:790.6px;"><span class="w">W=</span><span class="y">9.0</span><span class="w"> L=</span><span class="y">34.8</span></div>
<div class="s" style="left:1063px;top:790.6px;"><span class="y">P 128</span></div>
<svg class="a" style="left:863px;top:636.1px" width="20" height="80"><rect x="0" y="0.5" width="18" height="78" fill="url(#rb)"/><path d="M0 0.500H18.500V78.800H0" stroke="#c78a10" fill="none"/></svg>
<div class="s" style="left:883px;top:634.6px;"><span class="w">39.3</span></div>
<div class="s" style="left:883px;top:709.6px;"><span class="w">30.3</span></div>
<svg class="a" style="left:0;top:0;pointer-events:none" width="1500" height="812" viewBox="0 0 1500 812"><defs><filter id="mtt" x="0" y="0" width="100%" height="100%" color-interpolation-filters="sRGB">
<feTurbulence type="fractalNoise" baseFrequency="0.29" numOctaves="1" seed="3" result="t"/>
<feColorMatrix type="matrix" values="1 0 0 0 0  1 0 0 0 0  1 0 0 0 0  0 0 0 0 1"/>
<feComponentTransfer><feFuncR type="table" tableValues="1.000 1.000 1.000 1.000 1.000 1.000 1.000 1.000 1.000 1.000 1.000 1.000 1.000 1.000 1.000 1.000 1.000 1.000 1.000 1.000 1.000 1.000 1.000 1.000 1.000 1.000 1.000 0.912 0.742 0.572 0.392 0.196 0.000 0.000 0.000 0.000 0.000 0.000 0.000 0.000 0.000"/><feFuncG type="table" tableValues="0.000 0.000 0.000 0.000 0.000 0.000 0.000 0.000 0.000 0.003 0.006 0.009 0.012 0.015 0.018 0.022 0.025 0.028 0.031 0.034 0.037 0.093 0.286 0.480 0.629 0.755 0.881 0.951 0.970 0.989 0.984 0.943 0.902 0.902 0.902 0.902 0.902 0.902 0.902 0.902 0.902"/><feFuncB type="table" tableValues="0.000 0.000 0.000 0.000 0.000 0.000 0.000 0.000 0.000 0.000 0.000 0.000 0.000 0.000 0.000 0.000 0.000 0.000 0.000 0.000 0.000 0.000 0.000 0.000 0.000 0.000 0.000 0.000 0.000 0.000 0.039 0.137 0.235 0.235 0.235 0.235 0.235 0.235 0.235 0.235 0.235"/></feComponentTransfer>
</filter>
<filter id="mtto" x="0" y="0" width="100%" height="100%" color-interpolation-filters="sRGB">
<feTurbulence type="fractalNoise" baseFrequency="0.3" numOctaves="1" seed="11" result="t"/>
<feColorMatrix type="matrix" values="1 0 0 0 0  1 0 0 0 0  1 0 0 0 0  0 0 0 0 1"/>
<feComponentTransfer><feFuncR type="table" tableValues="1.000 1.000 1.000 1.000 1.000 1.000 1.000 1.000 1.000 1.000 1.000 1.000 1.000 1.000 1.000 1.000 1.000 1.000 1.000 1.000 1.000 1.000 1.000 1.000 1.000 1.000 1.000 1.000 1.000 1.000 1.000 1.000 1.000 1.000 1.000 1.000 1.000 1.000 1.000 1.000 1.000"/><feFuncG type="table" tableValues="0.431 0.431 0.431 0.431 0.431 0.431 0.431 0.431 0.431 0.431 0.431 0.431 0.431 0.451 0.471 0.490 0.510 0.529 0.549 0.569 0.588 0.608 0.627 0.647 0.667 0.686 0.706 0.725 0.745 0.745 0.745 0.745 0.745 0.745 0.745 0.745 0.745 0.745 0.745 0.745 0.745"/><feFuncB type="table" tableValues="0.000 0.000 0.000 0.000 0.000 0.000 0.000 0.000 0.000 0.000 0.000 0.000 0.000 0.010 0.020 0.029 0.039 0.049 0.059 0.069 0.078 0.083 0.088 0.093 0.098 0.103 0.108 0.113 0.118 0.118 0.118 0.118 0.118 0.118 0.118 0.118 0.118 0.118 0.118 0.118 0.118"/></feComponentTransfer>
</filter>
<filter id="ttp" x="0" y="0" width="100%" height="100%" color-interpolation-filters="sRGB">
<feTurbulence type="fractalNoise" baseFrequency="0.27" numOctaves="1" seed="5" result="t"/>
<feColorMatrix type="matrix" values="1 0 0 0 0  1 0 0 0 0  1 0 0 0 0  0 0 0 0 1"/>
<feComponentTransfer><feFuncR type="table" tableValues="0.000 0.000 0.000 0.000 0.000 0.000 0.000 0.000 0.000 0.000 0.000 0.000 0.000 0.000 0.000 0.000 0.000 0.000 0.000 0.054 0.471 1.000 1.000 1.000 1.000 1.000 1.000 1.000 1.000 1.000 1.000 1.000 1.000 1.000 1.000 1.000 1.000 1.000 1.000 1.000 1.000"/><feFuncG type="table" tableValues="0.000 0.000 0.000 0.000 0.000 0.000 0.000 0.000 0.000 0.000 0.000 0.000 0.000 0.000 0.000 0.000 0.000 0.000 0.061 0.562 0.910 0.725 0.078 0.070 0.062 0.054 0.047 0.039 0.031 0.023 0.016 0.008 0.000 0.000 0.000 0.000 0.000 0.000 0.000 0.000 0.000"/><feFuncB type="table" tableValues="0.000 0.000 0.000 0.000 0.000 0.000 0.000 0.000 0.000 0.000 0.000 0.000 0.000 0.000 0.000 0.000 0.000 0.000 0.222 0.650 0.141 0.000 0.000 0.000 0.000 0.000 0.000 0.000 0.000 0.000 0.000 0.000 0.000 0.000 0.000 0.000 0.000 0.000 0.000 0.000 0.000"/></feComponentTransfer>
</filter>
<filter id="ttpg" x="0" y="0" width="100%" height="100%" color-interpolation-filters="sRGB">
<feTurbulence type="fractalNoise" baseFrequency="0.4" numOctaves="1" seed="9" result="t"/>
<feColorMatrix type="matrix" values="1 0 0 0 0  1 0 0 0 0  1 0 0 0 0  0 0 0 0 1"/>
<feComponentTransfer><feFuncR type="table" tableValues="0.000 0.000 0.000 0.000 0.000 0.000 0.000 0.000 0.000 0.000 0.000 0.000 0.000 0.000 0.000 0.000 0.000 0.029 0.059 0.088 0.118 0.251 0.384 0.518 0.651 0.784 0.827 0.871 0.914 0.957 1.000 1.000 1.000 1.000 1.000 1.000 1.000 1.000 1.000 1.000 1.000"/><feFuncG type="table" tableValues="0.353 0.353 0.353 0.353 0.353 0.353 0.353 0.353 0.353 0.353 0.353 0.418 0.484 0.549 0.614 0.680 0.745 0.784 0.824 0.863 0.902 0.910 0.918 0.925 0.933 0.941 0.910 0.878 0.847 0.816 0.784 0.784 0.784 0.784 0.784 0.784 0.784 0.784 0.784 0.784 0.784"/><feFuncB type="table" tableValues="1.000 1.000 1.000 1.000 1.000 1.000 1.000 1.000 1.000 1.000 1.000 0.964 0.928 0.892 0.856 0.820 0.784 0.667 0.549 0.431 0.314 0.251 0.188 0.125 0.063 0.000 0.000 0.000 0.000 0.000 0.000 0.000 0.000 0.000 0.000 0.000 0.000 0.000 0.000 0.000 0.000"/></feComponentTransfer>
</filter>
<filter id="rc00" x="0" y="0" width="100%" height="100%" color-interpolation-filters="sRGB">
<feTurbulence type="fractalNoise" baseFrequency="0.24" numOctaves="2" seed="20" result="t"/>
<feColorMatrix type="matrix" values="1 0 0 0 0  1 0 0 0 0  1 0 0 0 0  0 0 0 0 1"/>
<feComponentTransfer><feFuncR type="table" tableValues="1.000 1.000 1.000 1.000 1.000 1.000 1.000 1.000 1.000 1.000 1.000 1.000 1.000 1.000 1.000 1.000 1.000 1.000 1.000 1.000 1.000 1.000 1.000 1.000 1.000 1.000 1.000 1.000 1.000 1.000 1.000 1.000 1.000 1.000 1.000 1.000 1.000 1.000 1.000 1.000 1.000"/><feFuncG type="table" tableValues="0.063 0.063 0.063 0.063 0.063 0.063 0.063 0.063 0.063 0.063 0.063 0.063 0.063 0.063 0.063 0.063 0.063 0.063 0.063 0.063 0.063 0.063 0.063 0.091 0.129 0.167 0.205 0.243 0.284 0.342 0.401 0.459 0.471 0.471 0.471 0.471 0.471 0.471 0.471 0.471 0.471"/><feFuncB type="table" tableValues="0.063 0.063 0.063 0.063 0.063 0.063 0.063 0.063 0.063 0.063 0.063 0.063 0.063 0.063 0.063 0.063 0.063 0.063 0.063 0.063 0.063 0.063 0.063 0.060 0.055 0.051 0.047 0.043 0.037 0.026 0.014 0.002 0.000 0.000 0.000 0.000 0.000 0.000 0.000 0.000 0.000"/></feComponentTransfer>
</filter>
<filter id="rc01" x="0" y="0" width="100%" height="100%" color-interpolation-filters="sRGB">
<feTurbulence type="fractalNoise" baseFrequency="0.24" numOctaves="2" seed="23" result="t"/>
<feColorMatrix type="matrix" values="1 0 0 0 0  1 0 0 0 0  1 0 0 0 0  0 0 0 0 1"/>
<feComponentTransfer><feFuncR type="table" tableValues="1.000 1.000 1.000 1.000 1.000 1.000 1.000 1.000 1.000 1.000 1.000 1.000 1.000 1.000 1.000 1.000 1.000 1.000 1.000 1.000 1.000 1.000 1.000 1.000 1.000 1.000 1.000 1.000 1.000 1.000 1.000 1.000 1.000 1.000 1.000 1.000 1.000 1.000 1.000 1.000 1.000"/><feFuncG type="table" tableValues="0.063 0.063 0.063 0.063 0.063 0.063 0.063 0.063 0.063 0.065 0.077 0.089 0.101 0.113 0.125 0.137 0.149 0.169 0.204 0.239 0.275 0.310 0.345 0.380 0.415 0.450 0.485 0.520 0.555 0.590 0.625 0.660 0.667 0.667 0.667 0.667 0.667 0.667 0.667 0.667 0.667"/><feFuncB type="table" tableValues="0.063 0.063 0.063 0.063 0.063 0.063 0.063 0.063 0.063 0.061 0.053 0.045 0.037 0.029 0.021 0.013 0.005 0.000 0.000 0.000 0.000 0.000 0.000 0.000 0.000 0.000 0.000 0.000 0.000 0.000 0.000 0.000 0.000 0.000 0.000 0.000 0.000 0.000 0.000 0.000 0.000"/></feComponentTransfer>
</filter>
<filter id="rc02" x="0" y="0" width="100%" height="100%" color-interpolation-filters="sRGB">
<feTurbulence type="fractalNoise" baseFrequency="0.24" numOctaves="2" seed="26" result="t"/>
<feColorMatrix type="matrix" values="1 0 0 0 0  1 0 0 0 0  1 0 0 0 0  0 0 0 0 1"/>
<feComponentTransfer><feFuncR type="table" tableValues="1.000 1.000 1.000 1.000 1.000 1.000 1.000 1.000 1.000 1.000 1.000 1.000 1.000 1.000 1.000 1.000 1.000 1.000 1.000 1.000 1.000 1.000 1.000 1.000 1.000 1.000 1.000 1.000 1.000 1.000 1.000 1.000 1.000 1.000 1.000 1.000 1.000 1.000 1.000 1.000 1.000"/><feFuncG type="table" tableValues="0.235 0.235 0.235 0.235 0.235 0.235 0.235 0.235 0.235 0.246 0.298 0.351 0.403 0.456 0.508 0.561 0.606 0.644 0.681 0.719 0.756 0.794 0.831 0.869 0.890 0.903 0.915 0.928 0.940 0.953 0.965 0.978 0.980 0.980 0.980 0.980 0.980 0.980 0.980 0.980 0.980"/><feFuncB type="table" tableValues="0.000 0.000 0.000 0.000 0.000 0.000 0.000 0.000 0.000 0.000 0.000 0.000 0.000 0.000 0.000 0.000 0.000 0.000 0.000 0.000 0.000 0.000 0.000 0.000 0.013 0.033 0.053 0.073 0.093 0.113 0.133 0.153 0.157 0.157 0.157 0.157 0.157 0.157 0.157 0.157 0.157"/></feComponentTransfer>
</filter>
<filter id="rc10" x="0" y="0" width="100%" height="100%" color-interpolation-filters="sRGB">
<feTurbulence type="fractalNoise" baseFrequency="0.24" numOctaves="2" seed="29" result="t"/>
<feColorMatrix type="matrix" values="1 0 0 0 0  1 0 0 0 0  1 0 0 0 0  0 0 0 0 1"/>
<feComponentTransfer><feFuncR type="table" tableValues="1.000 1.000 1.000 1.000 1.000 1.000 1.000 1.000 1.000 1.000 1.000 1.000 1.000 1.000 1.000 1.000 0.982 0.944 0.906 0.868 0.830 0.792 0.754 0.718 0.683 0.648 0.613 0.578 0.543 0.508 0.473 0.438 0.431 0.431 0.431 0.431 0.431 0.431 0.431 0.431 0.431"/><feFuncG type="table" tableValues="0.667 0.667 0.667 0.667 0.667 0.667 0.667 0.667 0.667 0.673 0.705 0.737 0.769 0.801 0.834 0.866 0.891 0.908 0.926 0.943 0.961 0.978 0.996 0.997 0.992 0.988 0.984 0.979 0.975 0.970 0.966 0.962 0.961 0.961 0.961 0.961 0.961 0.961 0.961 0.961 0.961"/><feFuncB type="table" tableValues="0.078 0.078 0.078 0.078 0.078 0.078 0.078 0.078 0.078 0.076 0.064 0.053 0.041 0.029 0.018 0.006 0.006 0.017 0.029 0.041 0.052 0.064 0.076 0.082 0.086 0.091 0.095 0.099 0.104 0.108 0.112 0.117 0.118 0.118 0.118 0.118 0.118 0.118 0.118 0.118 0.118"/></feComponentTransfer>
</filter>
<filter id="rc12" x="0" y="0" width="100%" height="100%" color-interpolation-filters="sRGB">
<feTurbulence type="fractalNoise" baseFrequency="0.24" numOctaves="2" seed="32" result="t"/>
<feColorMatrix type="matrix" values="1 0 0 0 0  1 0 0 0 0  1 0 0 0 0  0 0 0 0 1"/>
<feComponentTransfer><feFuncR type="table" tableValues="0.471 0.471 0.471 0.471 0.471 0.471 0.471 0.471 0.471 0.463 0.423 0.383 0.343 0.303 0.263 0.222 0.182 0.153 0.141 0.129 0.118 0.106 0.094 0.083 0.078 0.078 0.078 0.078 0.078 0.078 0.078 0.078 0.078 0.078 0.078 0.078 0.078 0.078 0.078 0.078 0.078"/><feFuncG type="table" tableValues="0.941 0.941 0.941 0.941 0.941 0.941 0.941 0.941 0.941 0.941 0.938 0.936 0.933 0.931 0.928 0.926 0.923 0.917 0.906 0.894 0.882 0.871 0.859 0.847 0.813 0.765 0.718 0.670 0.623 0.575 0.528 0.480 0.471 0.471 0.471 0.471 0.471 0.471 0.471 0.471 0.471"/><feFuncB type="table" tableValues="0.157 0.157 0.157 0.157 0.157 0.157 0.157 0.157 0.157 0.159 0.169 0.179 0.189 0.199 0.209 0.219 0.229 0.254 0.307 0.359 0.412 0.464 0.517 0.569 0.615 0.658 0.700 0.743 0.786 0.828 0.871 0.913 0.922 0.922 0.922 0.922 0.922 0.922 0.922 0.922 0.922"/></feComponentTransfer>
</filter>
<filter id="rc20" x="0" y="0" width="100%" height="100%" color-interpolation-filters="sRGB">
<feTurbulence type="fractalNoise" baseFrequency="0.24" numOctaves="2" seed="35" result="t"/>
<feColorMatrix type="matrix" values="1 0 0 0 0  1 0 0 0 0  1 0 0 0 0  0 0 0 0 1"/>
<feComponentTransfer><feFuncR type="table" tableValues="0.157 0.157 0.157 0.157 0.157 0.157 0.157 0.157 0.157 0.155 0.143 0.131 0.120 0.108 0.096 0.085 0.079 0.082 0.084 0.086 0.088 0.090 0.093 0.095 0.097 0.100 0.102 0.105 0.108 0.111 0.114 0.117 0.118 0.118 0.118 0.118 0.118 0.118 0.118 0.118 0.118"/><feFuncG type="table" tableValues="0.078 0.078 0.078 0.078 0.078 0.078 0.078 0.078 0.078 0.087 0.127 0.168 0.209 0.250 0.291 0.332 0.361 0.379 0.396 0.414 0.431 0.449 0.466 0.484 0.501 0.523 0.550 0.576 0.602 0.629 0.655 0.681 0.686 0.686 0.686 0.686 0.686 0.686 0.686 0.686 0.686"/><feFuncB type="table" tableValues="0.745 0.745 0.745 0.745 0.745 0.745 0.745 0.745 0.745 0.752 0.784 0.816 0.848 0.880 0.912 0.944 0.962 0.964 0.966 0.968 0.971 0.973 0.975 0.977 0.979 0.977 0.972 0.966 0.960 0.954 0.948 0.942 0.941 0.941 0.941 0.941 0.941 0.941 0.941 0.941 0.941"/></feComponentTransfer>
</filter>
<filter id="rc21" x="0" y="0" width="100%" height="100%" color-interpolation-filters="sRGB">
<feTurbulence type="fractalNoise" baseFrequency="0.24" numOctaves="2" seed="38" result="t"/>
<feColorMatrix type="matrix" values="1 0 0 0 0  1 0 0 0 0  1 0 0 0 0  0 0 0 0 1"/>
<feComponentTransfer><feFuncR type="table" tableValues="0.196 0.196 0.196 0.196 0.196 0.196 0.196 0.196 0.196 0.198 0.207 0.215 0.224 0.233 0.242 0.250 0.259 0.268 0.272 0.262 0.252 0.242 0.232 0.222 0.212 0.202 0.190 0.176 0.162 0.148 0.134 0.120 0.118 0.118 0.118 0.118 0.118 0.118 0.118 0.118 0.118"/><feFuncG type="table" tableValues="0.031 0.031 0.031 0.031 0.031 0.031 0.031 0.031 0.031 0.032 0.036 0.039 0.043 0.046 0.050 0.053 0.057 0.060 0.066 0.078 0.090 0.102 0.114 0.126 0.138 0.150 0.171 0.206 0.241 0.276 0.311 0.346 0.353 0.353 0.353 0.353 0.353 0.353 0.353 0.353 0.353"/><feFuncB type="table" tableValues="0.353 0.353 0.353 0.353 0.353 0.353 0.353 0.353 0.353 0.359 0.390 0.420 0.451 0.482 0.512 0.543 0.574 0.604 0.632 0.652 0.672 0.692 0.712 0.732 0.752 0.772 0.794 0.819 0.843 0.868 0.892 0.917 0.922 0.922 0.922 0.922 0.922 0.922 0.922 0.922 0.922"/></feComponentTransfer>
</filter>
<filter id="rc22" x="0" y="0" width="100%" height="100%" color-interpolation-filters="sRGB">
<feTurbulence type="fractalNoise" baseFrequency="0.24" numOctaves="2" seed="41" result="t"/>
<feColorMatrix type="matrix" values="1 0 0 0 0  1 0 0 0 0  1 0 0 0 0  0 0 0 0 1"/>
<feComponentTransfer><feFuncR type="table" tableValues="0.000 0.000 0.000 0.000 0.000 0.000 0.000 0.000 0.000 0.000 0.000 0.000 0.000 0.000 0.000 0.000 0.000 0.000 0.000 0.000 0.000 0.000 0.000 0.021 0.089 0.157 0.225 0.284 0.319 0.354 0.389 0.424 0.431 0.431 0.431 0.431 0.431 0.431 0.431 0.431 0.431"/><feFuncG type="table" tableValues="0.000 0.000 0.000 0.000 0.000 0.000 0.000 0.000 0.000 0.000 0.000 0.000 0.000 0.000 0.000 0.000 0.000 0.000 0.000 0.000 0.000 0.000 0.000 0.002 0.010 0.018 0.026 0.033 0.038 0.043 0.049 0.054 0.055 0.055 0.055 0.055 0.055 0.055 0.055 0.055 0.055"/><feFuncB type="table" tableValues="0.000 0.000 0.000 0.000 0.000 0.000 0.000 0.000 0.000 0.000 0.000 0.000 0.000 0.000 0.000 0.000 0.000 0.000 0.000 0.000 0.000 0.000 0.000 0.021 0.089 0.157 0.225 0.282 0.308 0.334 0.361 0.387 0.392 0.392 0.392 0.392 0.392 0.392 0.392 0.392 0.392"/></feComponentTransfer>
</filter>
<filter id="spk" x="0" y="0" width="100%" height="100%" color-interpolation-filters="sRGB">
<feTurbulence type="fractalNoise" baseFrequency="0.45" numOctaves="1" seed="2"/>
<feColorMatrix type="matrix" values="0 0 0 0 1  0 0 0 0 1  0 0 0 0 0.6  3 0 0 0 -1.5"/>
</filter>
<filter id="spkd" x="0" y="0" width="100%" height="100%" color-interpolation-filters="sRGB">
<feTurbulence type="fractalNoise" baseFrequency="0.5" numOctaves="1" seed="4"/>
<feColorMatrix type="matrix" values="0 0 0 0 0  0 0 0 0 0  0 0 0 0 0  0 4 0 0 -2.3"/>
</filter>
<filter id="dots" x="0" y="0" width="100%" height="100%" color-interpolation-filters="sRGB">
<feTurbulence type="fractalNoise" baseFrequency="0.4" numOctaves="1" seed="8"/>
<feColorMatrix type="matrix" values="0 0 0 0 0.3  0 0 0 0 0  0 0 0 0 0.3  0 0 10 0 -6.9"/>
</filter>
<radialGradient id="fade"><stop offset="0.3" stop-color="#fff"/><stop offset="1" stop-color="#000"/></radialGradient>
<mask id="fm"><rect x="985" y="100" width="180" height="160" fill="url(#fade)"/></mask>
<clipPath id="c2"><circle cx="1075.3" cy="430.3" r="71.2"/></clipPath>
<clipPath id="c3"><circle cx="1075.8" cy="683.8" r="70"/></clipPath>
</defs>
<g mask="url(#fm)"><rect x="985" y="100" width="180" height="160" filter="url(#dots)"/></g>
<rect x="1039.3" y="141.3" width="22" height="22" filter="url(#rc00)"/>
<rect x="1038.8999999999999" y="140.9" width="22.8" height="22.8" fill="none" stroke="#241a70" stroke-width="0.9" opacity="0.9"/>
<rect x="1065" y="141.3" width="22" height="22" filter="url(#rc01)"/>
<rect x="1064.6" y="140.9" width="22.8" height="22.8" fill="none" stroke="#241a70" stroke-width="0.9" opacity="0.9"/>
<rect x="1090.5" y="141.3" width="22" height="22" filter="url(#rc02)"/>
<rect x="1090.1" y="140.9" width="22.8" height="22.8" fill="none" stroke="#241a70" stroke-width="0.9" opacity="0.9"/>
<rect x="1039.3" y="167" width="22" height="22" filter="url(#rc10)"/>
<rect x="1038.8999999999999" y="166.6" width="22.8" height="22.8" fill="none" stroke="#241a70" stroke-width="0.9" opacity="0.9"/>
<rect x="1090.5" y="167" width="22" height="22" filter="url(#rc12)"/>
<rect x="1090.1" y="166.6" width="22.8" height="22.8" fill="none" stroke="#241a70" stroke-width="0.9" opacity="0.9"/>
<rect x="1039.3" y="192.5" width="22" height="22" filter="url(#rc20)"/>
<rect x="1038.8999999999999" y="192.1" width="22.8" height="22.8" fill="none" stroke="#241a70" stroke-width="0.9" opacity="0.9"/>
<rect x="1065" y="192.5" width="22" height="22" filter="url(#rc21)"/>
<rect x="1064.6" y="192.1" width="22.8" height="22.8" fill="none" stroke="#241a70" stroke-width="0.9" opacity="0.9"/>
<rect x="1090.5" y="192.5" width="22" height="22" filter="url(#rc22)"/>
<rect x="1073" y="172" width="1.6" height="1.6" fill="#1890ff"/>
<rect x="1067" y="175" width="1.6" height="1.6" fill="#10c0e0"/>
<rect x="1069" y="184" width="1.6" height="1.6" fill="#18d0c0"/>
<rect x="1078" y="179" width="1.6" height="1.6" fill="#20c0ff"/>
<rect x="1085" y="181" width="1.6" height="1.6" fill="#2060ff"/>
<rect x="1083" y="171" width="1.6" height="1.6" fill="#1040d0"/>
<rect x="1066" y="182" width="1.6" height="1.6" fill="#10b0b0"/>
<rect x="1070" y="187" width="1.6" height="1.6" fill="#20d0a0"/>
<path d="M1073 178L1078 173" stroke="#20c8c8" stroke-width="1.2"/>
<path d="M1099.3 160.8L1090.5 152.0M1103.7 160.8L1112.5 152.0M1099.3 165.2L1090.5 174.0M1103.7 165.2L1112.5 174.0" stroke="#2a2608" stroke-width="2.7" fill="none"/><path d="M1099.3 160.8L1090.5 152.0M1103.7 160.8L1112.5 152.0M1099.3 165.2L1090.5 174.0M1103.7 165.2L1112.5 174.0" stroke="#c8b81e" stroke-width="0.750" stroke-dasharray="0.9 1.1" fill="none"/>
<rect x="1287" y="155.5" width="3" height="1" fill="#d8301a"/><rect x="1287" y="167.0" width="3" height="1" fill="#d8301a"/><rect x="1278" y="178.5" width="12" height="1" fill="#d8301a"/><rect x="1287" y="190.0" width="3" height="1" fill="#d8301a"/><rect x="1287" y="201.5" width="3" height="1" fill="#d8301a"/><rect x="1053.5" y="302" width="1" height="3" fill="#d8301a"/><rect x="1064.5" y="302" width="1" height="3" fill="#d8301a"/><rect x="1076.5" y="297" width="1" height="8" fill="#d8301a"/><rect x="1087.5" y="302" width="1" height="3" fill="#d8301a"/><rect x="1099.5" y="302" width="1" height="3" fill="#d8301a"/>
<circle cx="1075.3" cy="430.3" r="71.6" fill="none" stroke="#3060c0" stroke-width="1" opacity="0.7"/>
<g clip-path="url(#c2)"><rect x="1000" y="355" width="150" height="150" filter="url(#mtt)"/>
<rect x="1039.3" y="394" width="22" height="22" filter="url(#mtto)" opacity="0.85"/>
<rect x="1065" y="394" width="22" height="22" filter="url(#mtto)" opacity="0.85"/>
<rect x="1090.5" y="394" width="22" height="22" filter="url(#mtto)" opacity="0.85"/>
<rect x="1039.3" y="419.5" width="22" height="22" filter="url(#mtto)" opacity="0.85"/>
<rect x="1090.5" y="419.5" width="22" height="22" filter="url(#mtto)" opacity="0.85"/>
<rect x="1039.3" y="445" width="22" height="22" filter="url(#mtto)" opacity="0.35"/>
<rect x="1064.5" y="419" width="22.5" height="22.5" fill="#000"/>
</g>
<path d="M1069 431L1073 427" stroke="#20a8e0" stroke-width="1"/><rect x="1067" y="426" width="1.3" height="1.3" fill="#2060ff"/><rect x="1071" y="433" width="1.3" height="1.3" fill="#20d0d0"/>
<path d="M1099.3 412.8L1090.5 404.0M1103.7 412.8L1112.5 404.0M1099.3 417.2L1090.5 426.0M1103.7 417.2L1112.5 426.0" stroke="#2a2608" stroke-width="2.7" fill="none"/><path d="M1099.3 412.8L1090.5 404.0M1103.7 412.8L1112.5 404.0M1099.3 417.2L1090.5 426.0M1103.7 417.2L1112.5 426.0" stroke="#c8b81e" stroke-width="0.750" stroke-dasharray="0.9 1.1" fill="none"/>
<rect x="1287" y="408.0" width="3" height="1" fill="#d8301a"/><rect x="1287" y="419.5" width="3" height="1" fill="#d8301a"/><rect x="1278" y="431.0" width="12" height="1" fill="#d8301a"/><rect x="1287" y="442.5" width="3" height="1" fill="#d8301a"/><rect x="1287" y="454.0" width="3" height="1" fill="#d8301a"/><rect x="1053.5" y="554" width="1" height="3" fill="#d8301a"/><rect x="1064.5" y="554" width="1" height="3" fill="#d8301a"/><rect x="1076.5" y="549" width="1" height="8" fill="#d8301a"/><rect x="1087.5" y="554" width="1" height="3" fill="#d8301a"/><rect x="1099.5" y="554" width="1" height="3" fill="#d8301a"/>
<g clip-path="url(#c3)"><rect x="1000" y="608" width="150" height="150" filter="url(#ttp)"/>
<rect x="1040.0" y="648.2" width="20.6" height="20.6" fill="#1ea6a0"/>
<rect x="1065.7" y="648.2" width="20.6" height="20.6" fill="#1ea6a0"/>
<rect x="1091.2" y="648.2" width="20.6" height="20.6" fill="#1ea6a0"/>
<rect x="1040.0" y="673.7" width="20.6" height="20.6" fill="#1ea6a0"/>
<rect x="1064.5" y="673.0" width="23" height="23" fill="#000"/>
<rect x="1091.2" y="673.7" width="20.6" height="20.6" fill="#1ea6a0"/>
<rect x="1040.0" y="699.2" width="20.6" height="20.6" fill="#1ea6a0"/>
<rect x="1065.7" y="699.2" width="20.6" height="20.6" fill="#1ea6a0"/>
<rect x="1090.5" y="699" width="22" height="22" filter="url(#ttpg)" opacity="0.55"/>
<rect x="1069" y="703" width="2" height="2" fill="#30d060"/>
<rect x="1073" y="707" width="2" height="2" fill="#2080ff"/>
<rect x="1078" y="704" width="2" height="2" fill="#40e040"/>
<rect x="1081" y="711" width="2" height="2" fill="#2060e0"/>
<rect x="1070" y="713" width="2" height="2" fill="#20c0a0"/>
<rect x="1076" y="715" width="2" height="2" fill="#3090ff"/>
<rect x="1083" y="702" width="2" height="2" fill="#50e060"/>
</g>
<path d="M1098.8 665.8L1090.0 657.0M1103.2 665.8L1112.0 657.0M1098.8 670.2L1090.0 679.0M1103.2 670.2L1112.0 679.0" stroke="#2a2608" stroke-width="2.7" fill="none"/><path d="M1098.8 665.8L1090.0 657.0M1103.2 665.8L1112.0 657.0M1098.8 670.2L1090.0 679.0M1103.2 670.2L1112.0 679.0" stroke="#c8b81e" stroke-width="0.750" stroke-dasharray="0.9 1.1" fill="none"/>
<rect x="1287" y="661.0" width="3" height="1" fill="#d8301a"/><rect x="1287" y="672.5" width="3" height="1" fill="#d8301a"/><rect x="1278" y="684.0" width="12" height="1" fill="#d8301a"/><rect x="1287" y="695.5" width="3" height="1" fill="#d8301a"/><rect x="1287" y="707.0" width="3" height="1" fill="#d8301a"/><rect x="1053.5" y="807" width="1" height="3" fill="#d8301a"/><rect x="1064.5" y="807" width="1" height="3" fill="#d8301a"/><rect x="1076.5" y="802" width="1" height="8" fill="#d8301a"/><rect x="1087.5" y="807" width="1" height="3" fill="#d8301a"/><rect x="1099.5" y="807" width="1" height="3" fill="#d8301a"/>
</svg>
<div class="a" style="left:1291px;top:53px;width:209px;height:759px;background:#333"></div>
<div class="a" style="left:1495px;top:0;width:5px;height:812px;background:linear-gradient(#2c2c2c,#333 60%)"></div>
<div class="a" style="left:1496px;top:0;width:1px;height:812px;background:linear-gradient(#3c3c3c 0,#3c3c3c 50px,#6a6a6a 60px,#727272 100%)"></div>
<div class="a" style="left:1293px;top:53px;width:202px;height:396px;background:#303030;border-left:1px solid #4c4c4c"></div>
<div class="a" style="left:1294px;top:53px;width:201px;height:20px;background:linear-gradient(#5c5c5c 0,#4a4a4a 2px,#3a3a3a 50%,#2b2b2b 100%)"></div>
<div class="a" style="left:1294px;top:73px;width:201px;height:2px;background:#262626"></div>
<div class="a" style="left:1296px;top:57px;width:9px;height:13px;opacity:.8;background:repeating-conic-gradient(#6a6a6a 0 25%,#333 0 50%) 0 0/2px 2px"></div>
<div class="a" style="left:1310px;top:57px;font-size:10.2px;line-height:13px;font-weight:bold;color:#f2f2f2;white-space:nowrap;letter-spacing:-0.1px">Brainstat AIF</div>
<svg class="a" style="left:1460px;top:54px" width="34" height="19" viewBox="1460 54 34 19">
<circle cx="1469.4" cy="63.4" r="6.3" fill="none" stroke="#d0d0d0" stroke-width="1"/>
<text x="1469.4" y="67.6" text-anchor="middle" font-family="Liberation Sans, sans-serif" font-size="11.5" fill="#e0e0e0">?</text>
<g transform="translate(1485.4 63.5)" fill="#e2e2e2">
<circle r="4.6"/>
<rect x="-1.3" y="-6.6" width="2.6" height="13.2"/><rect x="-6.6" y="-1.3" width="13.2" height="2.6"/>
<g transform="rotate(45)"><rect x="-1.3" y="-6.6" width="2.6" height="13.2"/><rect x="-6.6" y="-1.3" width="13.2" height="2.6"/></g>
<circle r="2.2" fill="#3a3a3a"/>
</g></svg>
<div class="a" style="left:1294px;top:75px;width:191px;height:342px;background:#333;border:1px solid #2a2a2a;border-bottom:1px solid #5e5e5e;border-right:1px solid #555"></div>
<div class="a" style="left:1485px;top:75px;width:10px;height:342px;background:#242424"></div>
<div class="a" style="left:1486px;top:85.5px;width:8px;height:284px;background:linear-gradient(90deg,#3a3a3a,#565656 50%,#3a3a3a);border:1px solid #5c5c5c;border-radius:3px"></div>
<div class="a" style="left:1487px;top:78.500px;width:0;height:0;border-left:3px solid transparent;border-right:3px solid transparent;border-bottom:3.500px solid #eee"></div>
<div class="a" style="left:1487px;top:409.500px;width:0;height:0;border-left:3px solid transparent;border-right:3px solid transparent;border-top:3.500px solid #eee"></div>
<div class="p" style="left:1300px;top:81px;">Set sliders to select range of MR Units to</div>
<div class="p" style="left:1300px;top:92.7px;">be displayed. Pixels within the selected</div>
<div class="p" style="left:1300px;top:104.4px;">range of values are shown in green</div>
<div class="a" style="left:1320px;top:136px;width:136px;height:8px;background:#272727;border:1px solid #555;border-top-color:#1a1a1a;border-radius:2px"></div>
<div class="a" style="left:1325px;top:137px;width:76px;height:6px;background:linear-gradient(#25e925,#1fd01f)"></div>
<svg class="a" style="left:1318.6px;top:133.5px" width="12" height="13" viewBox="0 0 12 13"><path d="M0.5 1.2Q0.5 0.5 1.2 0.5H10.8Q11.5 0.5 11.5 1.2V7L6 12.3L0.5 7Z" fill="#f4f4f4" stroke="#9a9a9a" stroke-width="0.8"/></svg>
<svg class="a" style="left:1395.3px;top:133.5px" width="12" height="13" viewBox="0 0 12 13"><path d="M0.5 1.2Q0.5 0.5 1.2 0.5H10.8Q11.5 0.5 11.5 1.2V7L6 12.3L0.5 7Z" fill="#f4f4f4" stroke="#9a9a9a" stroke-width="0.8"/></svg>
<div class="a" style="left:1322px;top:159px;width:44px;height:21px;background:#1d1d1d;border:1px solid #141414;border-right-color:#5a5a5a;border-bottom-color:#5a5a5a;font-size:9px;line-height:20px;padding-left:5px;color:#e6e6e6">0</div>
<div class="a" style="left:1400px;top:159px;width:57px;height:21px;background:#1d1d1d;border:1px solid #141414;border-right-color:#5a5a5a;border-bottom-color:#5a5a5a;font-size:9px;line-height:20px;padding-left:5px;color:#e6e6e6">2250</div>
<div class="a" style="left:1299px;top:198px;width:16px;height:1px;background:#8a8a8a"></div>
<div class="a" style="left:1392px;top:198px;width:88px;height:1px;background:#8a8a8a"></div>
<svg class="a" style="left:1318px;top:192px" width="13" height="13" viewBox="0 0 13 13"><circle cx="6.5" cy="6.5" r="5.6" fill="#2a2a2a" stroke="#e8e8e8" stroke-width="1"/><path d="M4.6 3.4L9.4 6.5L4.6 9.6Z" fill="#fff"/></svg>
<div class="a" style="left:1334px;top:192px;font-size:10px;line-height:13px;color:#e0e0e0;white-space:nowrap;letter-spacing:-0.28px">Preprocessing</div>
<div class="a" style="left:1299px;top:222px;width:16px;height:1px;background:#8a8a8a"></div>
<div class="a" style="left:1376px;top:222px;width:104px;height:1px;background:#8a8a8a"></div>
<svg class="a" style="left:1318px;top:216px" width="13" height="13" viewBox="0 0 13 13"><circle cx="6.5" cy="6.5" r="5.6" fill="#2a2a2a" stroke="#e8e8e8" stroke-width="1"/><path d="M3.4 4.8H9.6L6.5 9.4Z" fill="#fff"/></svg>
<div class="a" style="left:1334px;top:216px;font-size:10px;line-height:13px;color:#e0e0e0;white-space:nowrap;letter-spacing:-0.28px">AIF Mode</div>
<div class="p" style="left:1300px;top:232.7px;">Select the vessel detection mode</div>
<svg class="a" style="left:1301px;top:264.5px" width="12" height="12" viewBox="0 0 12 12"><circle cx="6" cy="6" r="4.9" fill="#fbfbfb" stroke="#777" stroke-width="0.6"/></svg>
<div class="a" style="left:1317.5px;top:264px;font-size:10.4px;line-height:13px;color:#d0d0d0;white-space:nowrap;letter-spacing:-0.15px">Auto</div>
<svg class="a" style="left:1351px;top:264.5px" width="12" height="12" viewBox="0 0 12 12"><circle cx="6" cy="6" r="4.9" fill="#fbfbfb" stroke="#777" stroke-width="0.6"/></svg>
<div class="a" style="left:1367.5px;top:264px;font-size:10.4px;line-height:13px;color:#d0d0d0;white-space:nowrap;letter-spacing:-0.15px">Semi Auto</div>
<svg class="a" style="left:1427.5px;top:264.5px" width="12" height="12" viewBox="0 0 12 12"><circle cx="6" cy="6" r="4.9" fill="#fbfbfb" stroke="#777" stroke-width="0.6"/><circle cx="6" cy="6" r="2.6" fill="#1c3a66"/><circle cx="5.2" cy="5.2" r="1" fill="#6a8ab8"/></svg>
<div class="a" style="left:1444px;top:264px;font-size:10.4px;line-height:13px;color:#d0d0d0;white-space:nowrap;letter-spacing:-0.15px">Manual</div>
<div class="p" style="left:1300px;top:292.7px;">Identify an artery pixel and drop a</div>
<div class="p" style="left:1300px;top:304.5px;">single-pixel ROI at that location.</div>
<div class="p" style="left:1347.5px;top:338.5px;">Pixel ROI</div>
<div class="a" style="left:1401px;top:329px;width:31px;height:30px;background:linear-gradient(#484848,#303030);border:1px solid #6e6e6e;border-radius:2px"></div>
<svg class="a" style="left:1401px;top:329px" width="31" height="30" viewBox="0 0 31 30"><path d="M5 4.5L13 12.5M26 4.5L18 12.5M5 25.5L13 17.5M26 25.5L18 17.5" stroke="#dcdcdc" stroke-width="1.2" fill="none"/><rect x="15" y="14.5" width="1.2" height="1.2" fill="#ddd"/></svg>
<div class="p" style="left:1308px;top:372.3px;">Select Compute to update the maps</div>
<div class="a" style="left:1294px;top:419px;width:201px;height:1px;background:#4a4a4a"></div>
<div class="a" style="left:1294px;top:448px;width:203px;height:1px;background:#1c1c1c"></div>
<div class="a" style="left:1294px;top:449px;width:201px;height:363px;background:#333"></div>
<div class="a" style="left:1365px;top:425px;width:60px;height:19px;background:linear-gradient(#4e4e4e,#2c2c2c);border:1px solid #707070;border-radius:3px;font-size:9.700px;line-height:17px;text-align:center;color:#ececec;letter-spacing:-0.2px">Compute</div>
<div class="a" style="left:1291px;top:811px;width:209px;height:1px;background:#5a5a5a"></div>
<div class="a" style="left:0;top:811px;width:1291px;height:1px;background:#4a4a4a"></div>
</body></html>
